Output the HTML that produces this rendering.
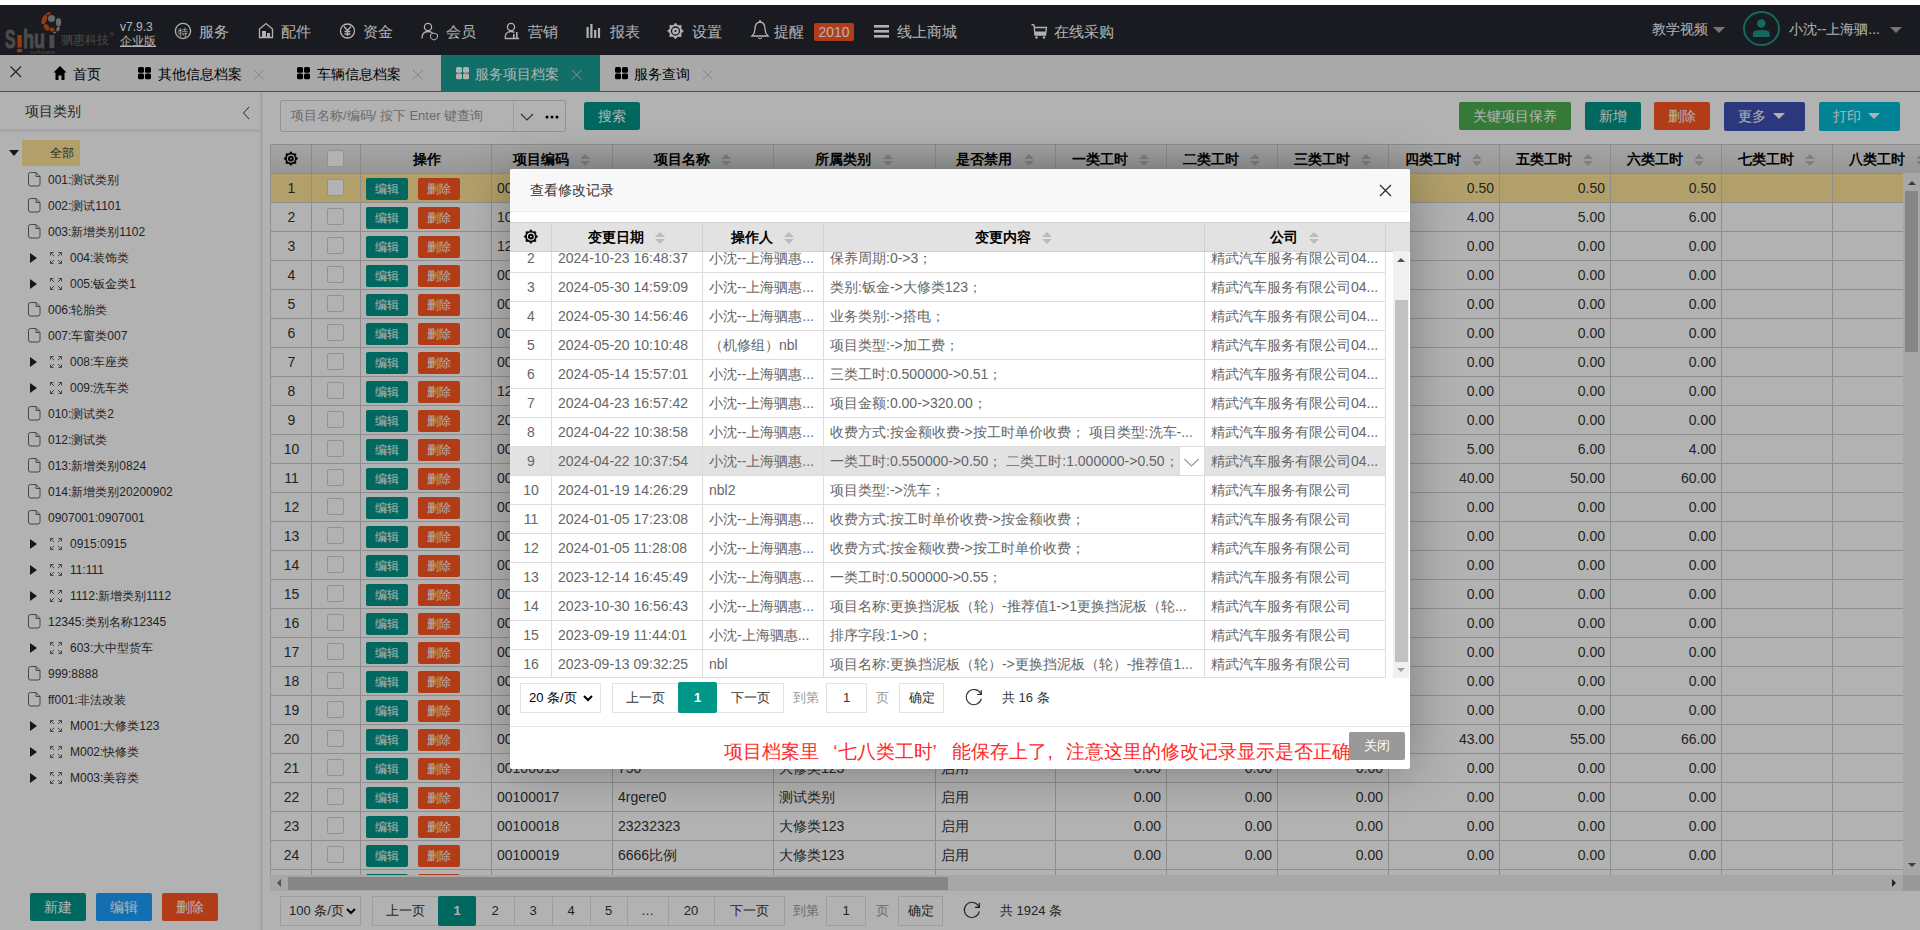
<!DOCTYPE html><html><head><meta charset="utf-8"><style>
*{box-sizing:border-box;margin:0;padding:0}
html,body{width:1920px;height:930px;overflow:hidden;background:#fff;font-family:"Liberation Sans", sans-serif;color:#333}
.a{position:absolute;white-space:nowrap}
svg{position:absolute;overflow:visible}
.nav{position:absolute;top:5px;height:50px;line-height:53px;font-size:15px;color:#fff;white-space:nowrap}
.tab{position:absolute;top:56px;height:36px;line-height:37px;font-size:14px;color:#000;white-space:nowrap}
.tree{position:absolute;font-size:12px;color:#333;white-space:nowrap;height:26px;line-height:26px}
.btn{position:absolute;height:28px;line-height:28px;color:#fff;font-size:14px;text-align:center;border-radius:2px;white-space:nowrap}
.mc{position:absolute;white-space:nowrap;overflow:hidden;font-size:14px;color:#666;height:29px;line-height:29px}
.pg{position:absolute;height:30px;border:1px solid #e2e2e2;background:#fff;font-size:13px;line-height:28px;text-align:center;color:#333}
</style></head><body>
<div class="a" style="left:0;top:5px;width:1920px;height:50px;background:#25282f"></div>
<svg style="left:0;top:0" width="130" height="60">
<text x="5" y="48" font-family="Liberation Sans" font-weight="bold" font-size="25" fill="#6e6e6e" stroke="#6e6e6e" stroke-width="0.9" textLength="10.5" lengthAdjust="spacingAndGlyphs">S</text>
<rect x="17.5" y="35" width="4.2" height="12.5" fill="#d9541b"/><ellipse cx="19.6" cy="50.6" rx="2.8" ry="1.9" fill="#d9541b"/>
<text x="23" y="48" font-family="Liberation Sans" font-weight="bold" font-size="25" fill="#6e6e6e" stroke="#6e6e6e" stroke-width="0.9" textLength="22" lengthAdjust="spacingAndGlyphs">hu</text>
<rect x="49.5" y="35" width="4.8" height="13" fill="#6e6e6e"/>
<text x="30" y="53.5" font-family="Liberation Sans" font-size="6" fill="#6a6a6a" textLength="25" lengthAdjust="spacingAndGlyphs">software</text>
<ellipse cx="44.3" cy="19.5" rx="2.4" ry="5" fill="#d9541b" transform="rotate(20 44.3 19.5)"/>
<ellipse cx="48.5" cy="13.6" rx="2.6" ry="1.2" fill="#d9541b" transform="rotate(-20 48.5 13.6)"/>
<ellipse cx="46.5" cy="27.3" rx="2.4" ry="3.4" fill="#d9541b" transform="rotate(-30 46.5 27.3)"/>
<ellipse cx="52" cy="29.5" rx="2.6" ry="2" fill="#d9541b"/>
<circle cx="51.5" cy="18.4" r="3.5" fill="#999"/>
<ellipse cx="58.5" cy="22.2" rx="2.6" ry="4.3" fill="#999"/>
<ellipse cx="58" cy="29" rx="1.6" ry="2.6" fill="#999" transform="rotate(25 58 29)"/>
<ellipse cx="54.5" cy="32.5" rx="1.6" ry="0.9" fill="#999"/>
<circle cx="112" cy="34" r="1.5" fill="none" stroke="#777" stroke-width="0.6"/>
</svg>
<div class="a" style="left:61px;top:33px;font-size:12px;line-height:14px;color:#6a6a6a">驷惠科技</div>
<div class="a" style="left:120px;top:20px;font-size:12px;color:#fff;line-height:14px">v7.9.3</div>
<div class="a" style="left:120px;top:33px;font-size:12px;color:#fff;line-height:16px;text-decoration:underline">企业版</div>
<div class="nav" style="left:199px">服务</div>
<div class="nav" style="left:281px">配件</div>
<div class="nav" style="left:363px">资金</div>
<div class="nav" style="left:446px">会员</div>
<div class="nav" style="left:528px">营销</div>
<div class="nav" style="left:610px">报表</div>
<div class="nav" style="left:692px">设置</div>
<div class="nav" style="left:774px">提醒</div>
<div class="nav" style="left:897px">线上商城</div>
<div class="nav" style="left:1054px">在线采购</div>
<svg style="left:0;top:0" width="1200" height="60" fill="none" stroke="#fff" stroke-width="1.3">
<circle cx="183" cy="31" r="7.6"/><text x="177.5" y="35.5" font-size="10" fill="#fff" stroke="none" font-family="Liberation Sans">特</text>
<path d="M259.5 37.5 V29 L266 23.5 L272.5 29 V37.5 Z"/><rect x="262" y="31" width="4" height="6" fill="#fff" stroke="none"/><rect x="267" y="33" width="3" height="4" fill="#fff" stroke="none"/>
<circle cx="347.5" cy="31" r="7"/><path d="M344 26.5 L347.5 30.5 L351 26.5 M347.5 30.5 V36 M344.5 31.5 H350.5 M344.5 34 H350.5"/>
<circle cx="428" cy="27" r="3.6"/><path d="M422 38.5 Q422 31.5 428 31.5 Q431 31.5 432.5 33"/><path d="M434 33 L437.5 34.5 V37 Q437.5 39 434 40 Q430.5 39 430.5 37 V34.5 Z" stroke-width="1"/>
<circle cx="511" cy="27" r="3.6"/><path d="M505 38.5 Q505 31.5 511 31.5 Q513 31.5 514.5 32.5 M505 38.5 H519"/><rect x="513" y="34" width="1.6" height="4" fill="#fff" stroke="none"/><rect x="516" y="32" width="1.6" height="6" fill="#fff" stroke="none"/>
</svg>
<svg style="left:0;top:0" width="1200" height="60">
<rect x="586.5" y="27" width="2.2" height="11" fill="#fff"/><rect x="590.3" y="24" width="2.2" height="14" fill="#fff"/><rect x="594.1" y="30" width="2.2" height="8" fill="#fff"/><rect x="597.9" y="28" width="2.2" height="10" fill="#fff"/>
<path d="M885 24.5 h0" />
<rect x="874" y="25" width="15" height="2.6" fill="#fff"/><rect x="874" y="30" width="15" height="2.6" fill="#fff"/><rect x="874" y="35" width="15" height="2.6" fill="#fff"/>
<path d="M1031.5 24.5 L1034 25 L1035 35 H1045.5 L1046.5 27.5 H1034.5" fill="none" stroke="#fff" stroke-width="1.3"/><rect x="1035" y="31.5" width="11" height="3.5" fill="#fff"/><circle cx="1036.5" cy="37.5" r="1.2" fill="#fff"/><circle cx="1044" cy="37.5" r="1.2" fill="#fff"/>
<path d="M752 36 Q755 33 755 29 Q755 22.5 760 22 Q765 22.5 765 29 Q765 33 768 36 Z" fill="none" stroke="#fff" stroke-width="1.3"/><path d="M758 37.5 Q760 40 762 37.5" fill="none" stroke="#fff" stroke-width="1.2"/><circle cx="760" cy="21" r="1" fill="#fff"/>
</svg>
<svg style="left:0;top:0" width="1920" height="930"><polygon points="675.50,23.00 677.77,25.53 681.16,25.34 680.97,28.73 683.50,31.00 680.97,33.27 681.16,36.66 677.77,36.47 675.50,39.00 673.23,36.47 669.84,36.66 670.03,33.27 667.50,31.00 670.03,28.73 669.84,25.34 673.23,25.53" fill="#fff" stroke="#fff" stroke-width="0.6" stroke-linejoin="round"/><circle cx="675.5" cy="31" r="4.00" fill="none" stroke="#25282f" stroke-width="1.28"/><circle cx="675.5" cy="31" r="1.04" fill="#25282f"/></svg>
<div class="a" style="left:814px;top:23px;width:40px;height:18px;background:#ff5722;color:#fff;font-size:14px;line-height:18px;text-align:center;border-radius:2px">2010</div>
<div class="a" style="left:1652px;top:5px;height:50px;line-height:49px;font-size:14px;color:#fff">教学视频</div>
<div class="a" style="left:1713px;top:27px;width:0;height:0;border-left:6.0px solid transparent;border-right:6.0px solid transparent;border-top:6px solid #aaa"></div>
<div class="a" style="left:1743px;top:11px;width:37px;height:35px;border:2px solid #1e9688;border-radius:50%"></div>
<svg style="left:0;top:0" width="1920" height="60"><circle cx="1761.3" cy="23.5" r="4.3" fill="#1e9688"/><path d="M1753 37 V33 Q1753 30 1761.3 30 Q1769.7 30 1769.7 33 V37 Z" fill="#1e9688"/></svg>
<div class="a" style="left:1789px;top:5px;height:50px;line-height:49px;font-size:14px;color:#fff">小沈--上海驷...</div>
<div class="a" style="left:1890px;top:27px;width:0;height:0;border-left:6.0px solid transparent;border-right:6.0px solid transparent;border-top:6px solid #aaa"></div>
<div class="a" style="left:0;top:55px;width:1920px;height:36px;background:#f3f3f3"></div>
<div class="a" style="left:0;top:91px;width:1920px;height:1px;background:#1aa094"></div>
<div class="a" style="left:441px;top:55px;width:159px;height:37px;background:#1aa094"></div>
<svg style="left:0;top:0" width="1920" height="100"><path d="M10.5 66.5 L21.0 77.0 M21.0 66.5 L10.5 77.0" stroke="#333" stroke-width="1.2" fill="none"/></svg>
<svg style="left:0;top:0" width="1920" height="100"><path d="M53.5 72.5 L60 66 L66.5 72.5 Z M55.5 71.5 H64.5 V80 H61.5 V75.5 H58.5 V80 H55.5 Z" fill="#000"/></svg>
<div class="tab" style="left:73px">首页</div>
<svg style="left:0;top:0" width="1920" height="100"><rect x="138" y="67" width="6" height="5.8" rx="1.5" fill="#000"/><rect x="138" y="73.5" width="6" height="5.8" rx="1.5" fill="#000"/><rect x="145" y="67" width="6" height="5.8" rx="1.5" fill="#000"/><rect x="145" y="73.5" width="6" height="5.8" rx="1.5" fill="#000"/></svg>
<div class="tab" style="left:158px;color:#000">其他信息档案</div>
<svg style="left:0;top:0" width="1920" height="100"><path d="M254 70 L263.5 79.5 M263.5 70 L254 79.5" stroke="#bbb" stroke-width="1.0" fill="none"/></svg>
<svg style="left:0;top:0" width="1920" height="100"><rect x="297" y="67" width="6" height="5.8" rx="1.5" fill="#000"/><rect x="297" y="73.5" width="6" height="5.8" rx="1.5" fill="#000"/><rect x="304" y="67" width="6" height="5.8" rx="1.5" fill="#000"/><rect x="304" y="73.5" width="6" height="5.8" rx="1.5" fill="#000"/></svg>
<div class="tab" style="left:317px;color:#000">车辆信息档案</div>
<svg style="left:0;top:0" width="1920" height="100"><path d="M413 70 L422.5 79.5 M422.5 70 L413 79.5" stroke="#bbb" stroke-width="1.0" fill="none"/></svg>
<svg style="left:0;top:0" width="1920" height="100"><rect x="456" y="67" width="6" height="5.8" rx="1.5" fill="#fff"/><rect x="456" y="73.5" width="6" height="5.8" rx="1.5" fill="#fff"/><rect x="463" y="67" width="6" height="5.8" rx="1.5" fill="#fff"/><rect x="463" y="73.5" width="6" height="5.8" rx="1.5" fill="#fff"/></svg>
<div class="tab" style="left:475px;color:#fff">服务项目档案</div>
<svg style="left:0;top:0" width="1920" height="100"><path d="M572 70 L581.5 79.5 M581.5 70 L572 79.5" stroke="#d0d0d0" stroke-width="1.0" fill="none"/></svg>
<svg style="left:0;top:0" width="1920" height="100"><rect x="615" y="67" width="6" height="5.8" rx="1.5" fill="#000"/><rect x="615" y="73.5" width="6" height="5.8" rx="1.5" fill="#000"/><rect x="622" y="67" width="6" height="5.8" rx="1.5" fill="#000"/><rect x="622" y="73.5" width="6" height="5.8" rx="1.5" fill="#000"/></svg>
<div class="tab" style="left:634px;color:#000">服务查询</div>
<svg style="left:0;top:0" width="1920" height="100"><path d="M703 70 L712.5 79.5 M712.5 70 L703 79.5" stroke="#bbb" stroke-width="1.0" fill="none"/></svg>
<div class="a" style="left:0;top:92px;width:260px;height:838px;background:#fff"></div>
<div class="a" style="left:0;top:129px;width:260px;height:3px;background:#ececec"></div>
<div class="a" style="left:25px;top:92px;height:37px;line-height:38px;font-size:14px;color:#333">项目类别</div>
<svg style="left:0;top:0" width="300" height="200"><path d="M249 107 L243.5 113 L249 119" stroke="#333" stroke-width="1" fill="none"/></svg>
<div class="a" style="left:260px;top:92px;width:3px;height:838px;background:#eee"></div>
<div class="a" style="left:22px;top:140px;width:58px;height:26px;background:#ffe699"></div>
<div class="a" style="left:9px;top:150px;width:0;height:0;border-left:5.0px solid transparent;border-right:5.0px solid transparent;border-top:6px solid #222"></div>
<div class="tree" style="left:50px;top:140px">全部</div>
<div class="tree" style="left:48px;top:167px">001:测试类别</div>
<div class="tree" style="left:48px;top:193px">002:测试1101</div>
<div class="tree" style="left:48px;top:219px">003:新增类别1102</div>
<div class="tree" style="left:70px;top:245px">004:装饰类</div>
<div class="a" style="left:30px;top:252.5px;width:0;height:0;border-top:5.5px solid transparent;border-bottom:5.5px solid transparent;border-left:7.5px solid #222"></div>
<div class="tree" style="left:70px;top:271px">005:钣金类1</div>
<div class="a" style="left:30px;top:278.5px;width:0;height:0;border-top:5.5px solid transparent;border-bottom:5.5px solid transparent;border-left:7.5px solid #222"></div>
<div class="tree" style="left:48px;top:297px">006:轮胎类</div>
<div class="tree" style="left:48px;top:323px">007:车窗类007</div>
<div class="tree" style="left:70px;top:349px">008:车座类</div>
<div class="a" style="left:30px;top:356.5px;width:0;height:0;border-top:5.5px solid transparent;border-bottom:5.5px solid transparent;border-left:7.5px solid #222"></div>
<div class="tree" style="left:70px;top:375px">009:洗车类</div>
<div class="a" style="left:30px;top:382.5px;width:0;height:0;border-top:5.5px solid transparent;border-bottom:5.5px solid transparent;border-left:7.5px solid #222"></div>
<div class="tree" style="left:48px;top:401px">010:测试类2</div>
<div class="tree" style="left:48px;top:427px">012:测试类</div>
<div class="tree" style="left:48px;top:453px">013:新增类别0824</div>
<div class="tree" style="left:48px;top:479px">014:新增类别20200902</div>
<div class="tree" style="left:48px;top:505px">0907001:0907001</div>
<div class="tree" style="left:70px;top:531px">0915:0915</div>
<div class="a" style="left:30px;top:538.5px;width:0;height:0;border-top:5.5px solid transparent;border-bottom:5.5px solid transparent;border-left:7.5px solid #222"></div>
<div class="tree" style="left:70px;top:557px">11:111</div>
<div class="a" style="left:30px;top:564.5px;width:0;height:0;border-top:5.5px solid transparent;border-bottom:5.5px solid transparent;border-left:7.5px solid #222"></div>
<div class="tree" style="left:70px;top:583px">1112:新增类别1112</div>
<div class="a" style="left:30px;top:590.5px;width:0;height:0;border-top:5.5px solid transparent;border-bottom:5.5px solid transparent;border-left:7.5px solid #222"></div>
<div class="tree" style="left:48px;top:609px">12345:类别名称12345</div>
<div class="tree" style="left:70px;top:635px">603:大中型货车</div>
<div class="a" style="left:30px;top:642.5px;width:0;height:0;border-top:5.5px solid transparent;border-bottom:5.5px solid transparent;border-left:7.5px solid #222"></div>
<div class="tree" style="left:48px;top:661px">999:8888</div>
<div class="tree" style="left:48px;top:687px">ff001:非法改装</div>
<div class="tree" style="left:70px;top:713px">M001:大修类123</div>
<div class="a" style="left:30px;top:720.5px;width:0;height:0;border-top:5.5px solid transparent;border-bottom:5.5px solid transparent;border-left:7.5px solid #222"></div>
<div class="tree" style="left:70px;top:739px">M002:快修类</div>
<div class="a" style="left:30px;top:746.5px;width:0;height:0;border-top:5.5px solid transparent;border-bottom:5.5px solid transparent;border-left:7.5px solid #222"></div>
<div class="tree" style="left:70px;top:765px">M003:美容类</div>
<div class="a" style="left:30px;top:772.5px;width:0;height:0;border-top:5.5px solid transparent;border-bottom:5.5px solid transparent;border-left:7.5px solid #222"></div>
<svg style="left:0;top:0" width="300" height="930"><path d="M28.5 174.5 Q28.5 172.5 30.5 172.5 H36 L40 176.5 V184 Q40 186 38 186 H30.5 Q28.5 186 28.5 184 Z M36 172.5 V176.5 H40" stroke="#666" stroke-width="1" fill="none"/><path d="M28.5 200.5 Q28.5 198.5 30.5 198.5 H36 L40 202.5 V210 Q40 212 38 212 H30.5 Q28.5 212 28.5 210 Z M36 198.5 V202.5 H40" stroke="#666" stroke-width="1" fill="none"/><path d="M28.5 226.5 Q28.5 224.5 30.5 224.5 H36 L40 228.5 V236 Q40 238 38 238 H30.5 Q28.5 238 28.5 236 Z M36 224.5 V228.5 H40" stroke="#666" stroke-width="1" fill="none"/><path d="M50.5 252.5 L54 256 M50.5 252.5 H53.5 M50.5 252.5 V255.5 M61.5 252.5 L58 256 M61.5 252.5 H58.5 M61.5 252.5 V255.5 M50.5 263.5 L54 260 M50.5 263.5 H53.5 M50.5 263.5 V260.5 M61.5 263.5 L58 260 M61.5 263.5 H58.5 M61.5 263.5 V260.5" stroke="#666" stroke-width="1" fill="none"/><path d="M50.5 278.5 L54 282 M50.5 278.5 H53.5 M50.5 278.5 V281.5 M61.5 278.5 L58 282 M61.5 278.5 H58.5 M61.5 278.5 V281.5 M50.5 289.5 L54 286 M50.5 289.5 H53.5 M50.5 289.5 V286.5 M61.5 289.5 L58 286 M61.5 289.5 H58.5 M61.5 289.5 V286.5" stroke="#666" stroke-width="1" fill="none"/><path d="M28.5 304.5 Q28.5 302.5 30.5 302.5 H36 L40 306.5 V314 Q40 316 38 316 H30.5 Q28.5 316 28.5 314 Z M36 302.5 V306.5 H40" stroke="#666" stroke-width="1" fill="none"/><path d="M28.5 330.5 Q28.5 328.5 30.5 328.5 H36 L40 332.5 V340 Q40 342 38 342 H30.5 Q28.5 342 28.5 340 Z M36 328.5 V332.5 H40" stroke="#666" stroke-width="1" fill="none"/><path d="M50.5 356.5 L54 360 M50.5 356.5 H53.5 M50.5 356.5 V359.5 M61.5 356.5 L58 360 M61.5 356.5 H58.5 M61.5 356.5 V359.5 M50.5 367.5 L54 364 M50.5 367.5 H53.5 M50.5 367.5 V364.5 M61.5 367.5 L58 364 M61.5 367.5 H58.5 M61.5 367.5 V364.5" stroke="#666" stroke-width="1" fill="none"/><path d="M50.5 382.5 L54 386 M50.5 382.5 H53.5 M50.5 382.5 V385.5 M61.5 382.5 L58 386 M61.5 382.5 H58.5 M61.5 382.5 V385.5 M50.5 393.5 L54 390 M50.5 393.5 H53.5 M50.5 393.5 V390.5 M61.5 393.5 L58 390 M61.5 393.5 H58.5 M61.5 393.5 V390.5" stroke="#666" stroke-width="1" fill="none"/><path d="M28.5 408.5 Q28.5 406.5 30.5 406.5 H36 L40 410.5 V418 Q40 420 38 420 H30.5 Q28.5 420 28.5 418 Z M36 406.5 V410.5 H40" stroke="#666" stroke-width="1" fill="none"/><path d="M28.5 434.5 Q28.5 432.5 30.5 432.5 H36 L40 436.5 V444 Q40 446 38 446 H30.5 Q28.5 446 28.5 444 Z M36 432.5 V436.5 H40" stroke="#666" stroke-width="1" fill="none"/><path d="M28.5 460.5 Q28.5 458.5 30.5 458.5 H36 L40 462.5 V470 Q40 472 38 472 H30.5 Q28.5 472 28.5 470 Z M36 458.5 V462.5 H40" stroke="#666" stroke-width="1" fill="none"/><path d="M28.5 486.5 Q28.5 484.5 30.5 484.5 H36 L40 488.5 V496 Q40 498 38 498 H30.5 Q28.5 498 28.5 496 Z M36 484.5 V488.5 H40" stroke="#666" stroke-width="1" fill="none"/><path d="M28.5 512.5 Q28.5 510.5 30.5 510.5 H36 L40 514.5 V522 Q40 524 38 524 H30.5 Q28.5 524 28.5 522 Z M36 510.5 V514.5 H40" stroke="#666" stroke-width="1" fill="none"/><path d="M50.5 538.5 L54 542 M50.5 538.5 H53.5 M50.5 538.5 V541.5 M61.5 538.5 L58 542 M61.5 538.5 H58.5 M61.5 538.5 V541.5 M50.5 549.5 L54 546 M50.5 549.5 H53.5 M50.5 549.5 V546.5 M61.5 549.5 L58 546 M61.5 549.5 H58.5 M61.5 549.5 V546.5" stroke="#666" stroke-width="1" fill="none"/><path d="M50.5 564.5 L54 568 M50.5 564.5 H53.5 M50.5 564.5 V567.5 M61.5 564.5 L58 568 M61.5 564.5 H58.5 M61.5 564.5 V567.5 M50.5 575.5 L54 572 M50.5 575.5 H53.5 M50.5 575.5 V572.5 M61.5 575.5 L58 572 M61.5 575.5 H58.5 M61.5 575.5 V572.5" stroke="#666" stroke-width="1" fill="none"/><path d="M50.5 590.5 L54 594 M50.5 590.5 H53.5 M50.5 590.5 V593.5 M61.5 590.5 L58 594 M61.5 590.5 H58.5 M61.5 590.5 V593.5 M50.5 601.5 L54 598 M50.5 601.5 H53.5 M50.5 601.5 V598.5 M61.5 601.5 L58 598 M61.5 601.5 H58.5 M61.5 601.5 V598.5" stroke="#666" stroke-width="1" fill="none"/><path d="M28.5 616.5 Q28.5 614.5 30.5 614.5 H36 L40 618.5 V626 Q40 628 38 628 H30.5 Q28.5 628 28.5 626 Z M36 614.5 V618.5 H40" stroke="#666" stroke-width="1" fill="none"/><path d="M50.5 642.5 L54 646 M50.5 642.5 H53.5 M50.5 642.5 V645.5 M61.5 642.5 L58 646 M61.5 642.5 H58.5 M61.5 642.5 V645.5 M50.5 653.5 L54 650 M50.5 653.5 H53.5 M50.5 653.5 V650.5 M61.5 653.5 L58 650 M61.5 653.5 H58.5 M61.5 653.5 V650.5" stroke="#666" stroke-width="1" fill="none"/><path d="M28.5 668.5 Q28.5 666.5 30.5 666.5 H36 L40 670.5 V678 Q40 680 38 680 H30.5 Q28.5 680 28.5 678 Z M36 666.5 V670.5 H40" stroke="#666" stroke-width="1" fill="none"/><path d="M28.5 694.5 Q28.5 692.5 30.5 692.5 H36 L40 696.5 V704 Q40 706 38 706 H30.5 Q28.5 706 28.5 704 Z M36 692.5 V696.5 H40" stroke="#666" stroke-width="1" fill="none"/><path d="M50.5 720.5 L54 724 M50.5 720.5 H53.5 M50.5 720.5 V723.5 M61.5 720.5 L58 724 M61.5 720.5 H58.5 M61.5 720.5 V723.5 M50.5 731.5 L54 728 M50.5 731.5 H53.5 M50.5 731.5 V728.5 M61.5 731.5 L58 728 M61.5 731.5 H58.5 M61.5 731.5 V728.5" stroke="#666" stroke-width="1" fill="none"/><path d="M50.5 746.5 L54 750 M50.5 746.5 H53.5 M50.5 746.5 V749.5 M61.5 746.5 L58 750 M61.5 746.5 H58.5 M61.5 746.5 V749.5 M50.5 757.5 L54 754 M50.5 757.5 H53.5 M50.5 757.5 V754.5 M61.5 757.5 L58 754 M61.5 757.5 H58.5 M61.5 757.5 V754.5" stroke="#666" stroke-width="1" fill="none"/><path d="M50.5 772.5 L54 776 M50.5 772.5 H53.5 M50.5 772.5 V775.5 M61.5 772.5 L58 776 M61.5 772.5 H58.5 M61.5 772.5 V775.5 M50.5 783.5 L54 780 M50.5 783.5 H53.5 M50.5 783.5 V780.5 M61.5 783.5 L58 780 M61.5 783.5 H58.5 M61.5 783.5 V780.5" stroke="#666" stroke-width="1" fill="none"/></svg>
<div class="btn" style="left:30px;top:893px;width:56px;background:#009688">新建</div>
<div class="btn" style="left:96px;top:893px;width:56px;background:#1e9fff">编辑</div>
<div class="btn" style="left:162px;top:893px;width:56px;background:#ff5722">删除</div>
<div class="a" style="left:263px;top:92px;width:1657px;height:838px;background:#fff"></div>
<div class="a" style="left:280px;top:100px;width:286px;height:32px;background:#fff;border:1px solid #d2d2d2;border-radius:2px"></div>
<div class="a" style="left:513px;top:101px;width:1px;height:30px;background:#e2e2e2"></div>
<div class="a" style="left:291px;top:100px;height:32px;font-size:13px;line-height:32px;color:#999">项目名称/编码/ 按下 Enter 键查询</div>
<svg style="left:0;top:0" width="700" height="200"><path d="M521 114 L527 120 L533 114" stroke="#444" stroke-width="1.1" fill="none"/><circle cx="547" cy="117" r="1.5" fill="#000"/><circle cx="552" cy="117" r="1.5" fill="#000"/><circle cx="557" cy="117" r="1.5" fill="#000"/></svg>
<div class="btn" style="left:584px;top:102px;width:56px;background:#009688">搜索</div>
<div class="btn" style="left:1459px;top:102px;width:112px;background:#4caf50">关键项目保养</div>
<div class="btn" style="left:1585px;top:102px;width:56px;background:#009688">新增</div>
<div class="btn" style="left:1654px;top:102px;width:56px;background:#ff5722">删除</div>
<div class="btn" style="left:1724px;top:102px;width:81px;height:29px;background:#3f51b5;text-align:left;padding-left:14px">更多</div>
<div class="a" style="left:1773px;top:113px;width:0;height:0;border-left:6.0px solid transparent;border-right:6.0px solid transparent;border-top:6px solid #fff"></div>
<div class="btn" style="left:1819px;top:102px;width:81px;height:29px;background:#00bcd4;text-align:left;padding-left:14px">打印</div>
<div class="a" style="left:1868px;top:113px;width:0;height:0;border-left:6.0px solid transparent;border-right:6.0px solid transparent;border-top:6px solid #fff"></div>
<div class="a" style="left:270px;top:144px;width:1650px;height:731px;overflow:hidden;background:#fff;border-left:1px solid #ccc"><div class="a" style="left:0;top:0;width:1700px;height:30px;background:linear-gradient(#ececec,#d8d8d8);border-top:1px solid #c8c8c8;border-bottom:1px solid #c8c8c8"></div><div class="a" style="left:40px;top:0;width:1px;height:30px;background:#c8c8c8"></div><div class="a" style="left:89px;top:0;width:1px;height:30px;background:#c8c8c8"></div><div class="a" style="left:220px;top:0;width:1px;height:30px;background:#c8c8c8"></div><div class="a" style="left:90px;top:1px;width:131px;height:29px;font-size:14px;font-weight:bold;text-align:center;line-height:29px;color:#000">操作</div><div class="a" style="left:341px;top:0;width:1px;height:30px;background:#c8c8c8"></div><div class="a" style="left:241.8px;top:1px;height:29px;font-size:14px;font-weight:bold;line-height:29px;color:#000">项目编码</div><div class="a" style="left:309.25px;top:9.5px;width:0;height:0;border-left:5.0px solid transparent;border-right:5.0px solid transparent;border-bottom:5px solid #b8b8b8"></div><div class="a" style="left:309.25px;top:16.5px;width:0;height:0;border-left:5.0px solid transparent;border-right:5.0px solid transparent;border-top:5px solid #b8b8b8"></div><div class="a" style="left:502px;top:0;width:1px;height:30px;background:#c8c8c8"></div><div class="a" style="left:382.8px;top:1px;height:29px;font-size:14px;font-weight:bold;line-height:29px;color:#000">项目名称</div><div class="a" style="left:450.25px;top:9.5px;width:0;height:0;border-left:5.0px solid transparent;border-right:5.0px solid transparent;border-bottom:5px solid #b8b8b8"></div><div class="a" style="left:450.25px;top:16.5px;width:0;height:0;border-left:5.0px solid transparent;border-right:5.0px solid transparent;border-top:5px solid #b8b8b8"></div><div class="a" style="left:664px;top:0;width:1px;height:30px;background:#c8c8c8"></div><div class="a" style="left:544.2px;top:1px;height:29px;font-size:14px;font-weight:bold;line-height:29px;color:#000">所属类别</div><div class="a" style="left:611.75px;top:9.5px;width:0;height:0;border-left:5.0px solid transparent;border-right:5.0px solid transparent;border-bottom:5px solid #b8b8b8"></div><div class="a" style="left:611.75px;top:16.5px;width:0;height:0;border-left:5.0px solid transparent;border-right:5.0px solid transparent;border-top:5px solid #b8b8b8"></div><div class="a" style="left:784px;top:0;width:1px;height:30px;background:#c8c8c8"></div><div class="a" style="left:685.2px;top:1px;height:29px;font-size:14px;font-weight:bold;line-height:29px;color:#000">是否禁用</div><div class="a" style="left:752.75px;top:9.5px;width:0;height:0;border-left:5.0px solid transparent;border-right:5.0px solid transparent;border-bottom:5px solid #b8b8b8"></div><div class="a" style="left:752.75px;top:16.5px;width:0;height:0;border-left:5.0px solid transparent;border-right:5.0px solid transparent;border-top:5px solid #b8b8b8"></div><div class="a" style="left:895px;top:0;width:1px;height:30px;background:#c8c8c8"></div><div class="a" style="left:800.8px;top:1px;height:29px;font-size:14px;font-weight:bold;line-height:29px;color:#000">一类工时</div><div class="a" style="left:868.25px;top:9.5px;width:0;height:0;border-left:5.0px solid transparent;border-right:5.0px solid transparent;border-bottom:5px solid #b8b8b8"></div><div class="a" style="left:868.25px;top:16.5px;width:0;height:0;border-left:5.0px solid transparent;border-right:5.0px solid transparent;border-top:5px solid #b8b8b8"></div><div class="a" style="left:1006px;top:0;width:1px;height:30px;background:#c8c8c8"></div><div class="a" style="left:911.8px;top:1px;height:29px;font-size:14px;font-weight:bold;line-height:29px;color:#000">二类工时</div><div class="a" style="left:979.25px;top:9.5px;width:0;height:0;border-left:5.0px solid transparent;border-right:5.0px solid transparent;border-bottom:5px solid #b8b8b8"></div><div class="a" style="left:979.25px;top:16.5px;width:0;height:0;border-left:5.0px solid transparent;border-right:5.0px solid transparent;border-top:5px solid #b8b8b8"></div><div class="a" style="left:1117px;top:0;width:1px;height:30px;background:#c8c8c8"></div><div class="a" style="left:1022.8px;top:1px;height:29px;font-size:14px;font-weight:bold;line-height:29px;color:#000">三类工时</div><div class="a" style="left:1090.25px;top:9.5px;width:0;height:0;border-left:5.0px solid transparent;border-right:5.0px solid transparent;border-bottom:5px solid #b8b8b8"></div><div class="a" style="left:1090.25px;top:16.5px;width:0;height:0;border-left:5.0px solid transparent;border-right:5.0px solid transparent;border-top:5px solid #b8b8b8"></div><div class="a" style="left:1228px;top:0;width:1px;height:30px;background:#c8c8c8"></div><div class="a" style="left:1133.8px;top:1px;height:29px;font-size:14px;font-weight:bold;line-height:29px;color:#000">四类工时</div><div class="a" style="left:1201.25px;top:9.5px;width:0;height:0;border-left:5.0px solid transparent;border-right:5.0px solid transparent;border-bottom:5px solid #b8b8b8"></div><div class="a" style="left:1201.25px;top:16.5px;width:0;height:0;border-left:5.0px solid transparent;border-right:5.0px solid transparent;border-top:5px solid #b8b8b8"></div><div class="a" style="left:1339px;top:0;width:1px;height:30px;background:#c8c8c8"></div><div class="a" style="left:1244.8px;top:1px;height:29px;font-size:14px;font-weight:bold;line-height:29px;color:#000">五类工时</div><div class="a" style="left:1312.25px;top:9.5px;width:0;height:0;border-left:5.0px solid transparent;border-right:5.0px solid transparent;border-bottom:5px solid #b8b8b8"></div><div class="a" style="left:1312.25px;top:16.5px;width:0;height:0;border-left:5.0px solid transparent;border-right:5.0px solid transparent;border-top:5px solid #b8b8b8"></div><div class="a" style="left:1450px;top:0;width:1px;height:30px;background:#c8c8c8"></div><div class="a" style="left:1355.8px;top:1px;height:29px;font-size:14px;font-weight:bold;line-height:29px;color:#000">六类工时</div><div class="a" style="left:1423.25px;top:9.5px;width:0;height:0;border-left:5.0px solid transparent;border-right:5.0px solid transparent;border-bottom:5px solid #b8b8b8"></div><div class="a" style="left:1423.25px;top:16.5px;width:0;height:0;border-left:5.0px solid transparent;border-right:5.0px solid transparent;border-top:5px solid #b8b8b8"></div><div class="a" style="left:1561px;top:0;width:1px;height:30px;background:#c8c8c8"></div><div class="a" style="left:1466.8px;top:1px;height:29px;font-size:14px;font-weight:bold;line-height:29px;color:#000">七类工时</div><div class="a" style="left:1534.25px;top:9.5px;width:0;height:0;border-left:5.0px solid transparent;border-right:5.0px solid transparent;border-bottom:5px solid #b8b8b8"></div><div class="a" style="left:1534.25px;top:16.5px;width:0;height:0;border-left:5.0px solid transparent;border-right:5.0px solid transparent;border-top:5px solid #b8b8b8"></div><div class="a" style="left:1672px;top:0;width:1px;height:30px;background:#c8c8c8"></div><div class="a" style="left:1577.8px;top:1px;height:29px;font-size:14px;font-weight:bold;line-height:29px;color:#000">八类工时</div><div class="a" style="left:1645.25px;top:9.5px;width:0;height:0;border-left:5.0px solid transparent;border-right:5.0px solid transparent;border-bottom:5px solid #b8b8b8"></div><div class="a" style="left:1645.25px;top:16.5px;width:0;height:0;border-left:5.0px solid transparent;border-right:5.0px solid transparent;border-top:5px solid #b8b8b8"></div><div class="a" style="left:56px;top:6px;width:17px;height:17px;border:1px solid #d2d2d2;background:#fff;border-radius:2px"></div><div class="a" style="left:0;top:30px;width:1700px;height:29px;background:#ffe699;border-bottom:1px solid #ccc"></div><div class="a" style="left:0;top:30px;width:41px;height:29px;line-height:29px;text-align:center;font-size:14px;color:#333">1</div><div class="a" style="left:56px;top:35px;width:17px;height:17px;border:1px solid #d2d2d2;background:#fff;border-radius:2px"></div><div class="a" style="left:95px;top:34px;width:42px;height:22px;line-height:22px;font-size:12px;color:#fff;text-align:center;background:#009688;border-radius:2px">编辑</div><div class="a" style="left:147px;top:34px;width:42px;height:22px;line-height:22px;font-size:12px;color:#fff;text-align:center;background:#ff5722;border-radius:2px">删除</div><div class="a" style="left:1129px;top:30px;width:94px;height:29px;line-height:29px;text-align:right;font-size:14px;color:#333">0.50</div><div class="a" style="left:1240px;top:30px;width:94px;height:29px;line-height:29px;text-align:right;font-size:14px;color:#333">0.50</div><div class="a" style="left:1351px;top:30px;width:94px;height:29px;line-height:29px;text-align:right;font-size:14px;color:#333">0.50</div><div class="a" style="left:796px;top:30px;width:94px;height:29px;line-height:29px;text-align:right;font-size:14px;color:#333">0.00</div><div class="a" style="left:907px;top:30px;width:94px;height:29px;line-height:29px;text-align:right;font-size:14px;color:#333">0.00</div><div class="a" style="left:1018px;top:30px;width:94px;height:29px;line-height:29px;text-align:right;font-size:14px;color:#333">0.00</div><div class="a" style="left:0;top:59px;width:1700px;height:29px;background:#fff;border-bottom:1px solid #ccc"></div><div class="a" style="left:0;top:59px;width:41px;height:29px;line-height:29px;text-align:center;font-size:14px;color:#333">2</div><div class="a" style="left:56px;top:64px;width:17px;height:17px;border:1px solid #d2d2d2;background:#fff;border-radius:2px"></div><div class="a" style="left:95px;top:63px;width:42px;height:22px;line-height:22px;font-size:12px;color:#fff;text-align:center;background:#009688;border-radius:2px">编辑</div><div class="a" style="left:147px;top:63px;width:42px;height:22px;line-height:22px;font-size:12px;color:#fff;text-align:center;background:#ff5722;border-radius:2px">删除</div><div class="a" style="left:1129px;top:59px;width:94px;height:29px;line-height:29px;text-align:right;font-size:14px;color:#333">4.00</div><div class="a" style="left:1240px;top:59px;width:94px;height:29px;line-height:29px;text-align:right;font-size:14px;color:#333">5.00</div><div class="a" style="left:1351px;top:59px;width:94px;height:29px;line-height:29px;text-align:right;font-size:14px;color:#333">6.00</div><div class="a" style="left:796px;top:59px;width:94px;height:29px;line-height:29px;text-align:right;font-size:14px;color:#333">0.00</div><div class="a" style="left:907px;top:59px;width:94px;height:29px;line-height:29px;text-align:right;font-size:14px;color:#333">0.00</div><div class="a" style="left:1018px;top:59px;width:94px;height:29px;line-height:29px;text-align:right;font-size:14px;color:#333">0.00</div><div class="a" style="left:0;top:88px;width:1700px;height:29px;background:#fff;border-bottom:1px solid #ccc"></div><div class="a" style="left:0;top:88px;width:41px;height:29px;line-height:29px;text-align:center;font-size:14px;color:#333">3</div><div class="a" style="left:56px;top:93px;width:17px;height:17px;border:1px solid #d2d2d2;background:#fff;border-radius:2px"></div><div class="a" style="left:95px;top:92px;width:42px;height:22px;line-height:22px;font-size:12px;color:#fff;text-align:center;background:#009688;border-radius:2px">编辑</div><div class="a" style="left:147px;top:92px;width:42px;height:22px;line-height:22px;font-size:12px;color:#fff;text-align:center;background:#ff5722;border-radius:2px">删除</div><div class="a" style="left:1129px;top:88px;width:94px;height:29px;line-height:29px;text-align:right;font-size:14px;color:#333">0.00</div><div class="a" style="left:1240px;top:88px;width:94px;height:29px;line-height:29px;text-align:right;font-size:14px;color:#333">0.00</div><div class="a" style="left:1351px;top:88px;width:94px;height:29px;line-height:29px;text-align:right;font-size:14px;color:#333">0.00</div><div class="a" style="left:796px;top:88px;width:94px;height:29px;line-height:29px;text-align:right;font-size:14px;color:#333">0.00</div><div class="a" style="left:907px;top:88px;width:94px;height:29px;line-height:29px;text-align:right;font-size:14px;color:#333">0.00</div><div class="a" style="left:1018px;top:88px;width:94px;height:29px;line-height:29px;text-align:right;font-size:14px;color:#333">0.00</div><div class="a" style="left:0;top:117px;width:1700px;height:29px;background:#fff;border-bottom:1px solid #ccc"></div><div class="a" style="left:0;top:117px;width:41px;height:29px;line-height:29px;text-align:center;font-size:14px;color:#333">4</div><div class="a" style="left:56px;top:122px;width:17px;height:17px;border:1px solid #d2d2d2;background:#fff;border-radius:2px"></div><div class="a" style="left:95px;top:121px;width:42px;height:22px;line-height:22px;font-size:12px;color:#fff;text-align:center;background:#009688;border-radius:2px">编辑</div><div class="a" style="left:147px;top:121px;width:42px;height:22px;line-height:22px;font-size:12px;color:#fff;text-align:center;background:#ff5722;border-radius:2px">删除</div><div class="a" style="left:1129px;top:117px;width:94px;height:29px;line-height:29px;text-align:right;font-size:14px;color:#333">0.00</div><div class="a" style="left:1240px;top:117px;width:94px;height:29px;line-height:29px;text-align:right;font-size:14px;color:#333">0.00</div><div class="a" style="left:1351px;top:117px;width:94px;height:29px;line-height:29px;text-align:right;font-size:14px;color:#333">0.00</div><div class="a" style="left:796px;top:117px;width:94px;height:29px;line-height:29px;text-align:right;font-size:14px;color:#333">0.00</div><div class="a" style="left:907px;top:117px;width:94px;height:29px;line-height:29px;text-align:right;font-size:14px;color:#333">0.00</div><div class="a" style="left:1018px;top:117px;width:94px;height:29px;line-height:29px;text-align:right;font-size:14px;color:#333">0.00</div><div class="a" style="left:0;top:146px;width:1700px;height:29px;background:#fff;border-bottom:1px solid #ccc"></div><div class="a" style="left:0;top:146px;width:41px;height:29px;line-height:29px;text-align:center;font-size:14px;color:#333">5</div><div class="a" style="left:56px;top:151px;width:17px;height:17px;border:1px solid #d2d2d2;background:#fff;border-radius:2px"></div><div class="a" style="left:95px;top:150px;width:42px;height:22px;line-height:22px;font-size:12px;color:#fff;text-align:center;background:#009688;border-radius:2px">编辑</div><div class="a" style="left:147px;top:150px;width:42px;height:22px;line-height:22px;font-size:12px;color:#fff;text-align:center;background:#ff5722;border-radius:2px">删除</div><div class="a" style="left:1129px;top:146px;width:94px;height:29px;line-height:29px;text-align:right;font-size:14px;color:#333">0.00</div><div class="a" style="left:1240px;top:146px;width:94px;height:29px;line-height:29px;text-align:right;font-size:14px;color:#333">0.00</div><div class="a" style="left:1351px;top:146px;width:94px;height:29px;line-height:29px;text-align:right;font-size:14px;color:#333">0.00</div><div class="a" style="left:796px;top:146px;width:94px;height:29px;line-height:29px;text-align:right;font-size:14px;color:#333">0.00</div><div class="a" style="left:907px;top:146px;width:94px;height:29px;line-height:29px;text-align:right;font-size:14px;color:#333">0.00</div><div class="a" style="left:1018px;top:146px;width:94px;height:29px;line-height:29px;text-align:right;font-size:14px;color:#333">0.00</div><div class="a" style="left:0;top:175px;width:1700px;height:29px;background:#fff;border-bottom:1px solid #ccc"></div><div class="a" style="left:0;top:175px;width:41px;height:29px;line-height:29px;text-align:center;font-size:14px;color:#333">6</div><div class="a" style="left:56px;top:180px;width:17px;height:17px;border:1px solid #d2d2d2;background:#fff;border-radius:2px"></div><div class="a" style="left:95px;top:179px;width:42px;height:22px;line-height:22px;font-size:12px;color:#fff;text-align:center;background:#009688;border-radius:2px">编辑</div><div class="a" style="left:147px;top:179px;width:42px;height:22px;line-height:22px;font-size:12px;color:#fff;text-align:center;background:#ff5722;border-radius:2px">删除</div><div class="a" style="left:1129px;top:175px;width:94px;height:29px;line-height:29px;text-align:right;font-size:14px;color:#333">0.00</div><div class="a" style="left:1240px;top:175px;width:94px;height:29px;line-height:29px;text-align:right;font-size:14px;color:#333">0.00</div><div class="a" style="left:1351px;top:175px;width:94px;height:29px;line-height:29px;text-align:right;font-size:14px;color:#333">0.00</div><div class="a" style="left:796px;top:175px;width:94px;height:29px;line-height:29px;text-align:right;font-size:14px;color:#333">0.00</div><div class="a" style="left:907px;top:175px;width:94px;height:29px;line-height:29px;text-align:right;font-size:14px;color:#333">0.00</div><div class="a" style="left:1018px;top:175px;width:94px;height:29px;line-height:29px;text-align:right;font-size:14px;color:#333">0.00</div><div class="a" style="left:0;top:204px;width:1700px;height:29px;background:#fff;border-bottom:1px solid #ccc"></div><div class="a" style="left:0;top:204px;width:41px;height:29px;line-height:29px;text-align:center;font-size:14px;color:#333">7</div><div class="a" style="left:56px;top:209px;width:17px;height:17px;border:1px solid #d2d2d2;background:#fff;border-radius:2px"></div><div class="a" style="left:95px;top:208px;width:42px;height:22px;line-height:22px;font-size:12px;color:#fff;text-align:center;background:#009688;border-radius:2px">编辑</div><div class="a" style="left:147px;top:208px;width:42px;height:22px;line-height:22px;font-size:12px;color:#fff;text-align:center;background:#ff5722;border-radius:2px">删除</div><div class="a" style="left:1129px;top:204px;width:94px;height:29px;line-height:29px;text-align:right;font-size:14px;color:#333">0.00</div><div class="a" style="left:1240px;top:204px;width:94px;height:29px;line-height:29px;text-align:right;font-size:14px;color:#333">0.00</div><div class="a" style="left:1351px;top:204px;width:94px;height:29px;line-height:29px;text-align:right;font-size:14px;color:#333">0.00</div><div class="a" style="left:796px;top:204px;width:94px;height:29px;line-height:29px;text-align:right;font-size:14px;color:#333">0.00</div><div class="a" style="left:907px;top:204px;width:94px;height:29px;line-height:29px;text-align:right;font-size:14px;color:#333">0.00</div><div class="a" style="left:1018px;top:204px;width:94px;height:29px;line-height:29px;text-align:right;font-size:14px;color:#333">0.00</div><div class="a" style="left:0;top:233px;width:1700px;height:29px;background:#fff;border-bottom:1px solid #ccc"></div><div class="a" style="left:0;top:233px;width:41px;height:29px;line-height:29px;text-align:center;font-size:14px;color:#333">8</div><div class="a" style="left:56px;top:238px;width:17px;height:17px;border:1px solid #d2d2d2;background:#fff;border-radius:2px"></div><div class="a" style="left:95px;top:237px;width:42px;height:22px;line-height:22px;font-size:12px;color:#fff;text-align:center;background:#009688;border-radius:2px">编辑</div><div class="a" style="left:147px;top:237px;width:42px;height:22px;line-height:22px;font-size:12px;color:#fff;text-align:center;background:#ff5722;border-radius:2px">删除</div><div class="a" style="left:1129px;top:233px;width:94px;height:29px;line-height:29px;text-align:right;font-size:14px;color:#333">0.00</div><div class="a" style="left:1240px;top:233px;width:94px;height:29px;line-height:29px;text-align:right;font-size:14px;color:#333">0.00</div><div class="a" style="left:1351px;top:233px;width:94px;height:29px;line-height:29px;text-align:right;font-size:14px;color:#333">0.00</div><div class="a" style="left:796px;top:233px;width:94px;height:29px;line-height:29px;text-align:right;font-size:14px;color:#333">0.00</div><div class="a" style="left:907px;top:233px;width:94px;height:29px;line-height:29px;text-align:right;font-size:14px;color:#333">0.00</div><div class="a" style="left:1018px;top:233px;width:94px;height:29px;line-height:29px;text-align:right;font-size:14px;color:#333">0.00</div><div class="a" style="left:0;top:262px;width:1700px;height:29px;background:#fff;border-bottom:1px solid #ccc"></div><div class="a" style="left:0;top:262px;width:41px;height:29px;line-height:29px;text-align:center;font-size:14px;color:#333">9</div><div class="a" style="left:56px;top:267px;width:17px;height:17px;border:1px solid #d2d2d2;background:#fff;border-radius:2px"></div><div class="a" style="left:95px;top:266px;width:42px;height:22px;line-height:22px;font-size:12px;color:#fff;text-align:center;background:#009688;border-radius:2px">编辑</div><div class="a" style="left:147px;top:266px;width:42px;height:22px;line-height:22px;font-size:12px;color:#fff;text-align:center;background:#ff5722;border-radius:2px">删除</div><div class="a" style="left:1129px;top:262px;width:94px;height:29px;line-height:29px;text-align:right;font-size:14px;color:#333">0.00</div><div class="a" style="left:1240px;top:262px;width:94px;height:29px;line-height:29px;text-align:right;font-size:14px;color:#333">0.00</div><div class="a" style="left:1351px;top:262px;width:94px;height:29px;line-height:29px;text-align:right;font-size:14px;color:#333">0.00</div><div class="a" style="left:796px;top:262px;width:94px;height:29px;line-height:29px;text-align:right;font-size:14px;color:#333">0.00</div><div class="a" style="left:907px;top:262px;width:94px;height:29px;line-height:29px;text-align:right;font-size:14px;color:#333">0.00</div><div class="a" style="left:1018px;top:262px;width:94px;height:29px;line-height:29px;text-align:right;font-size:14px;color:#333">0.00</div><div class="a" style="left:0;top:291px;width:1700px;height:29px;background:#fff;border-bottom:1px solid #ccc"></div><div class="a" style="left:0;top:291px;width:41px;height:29px;line-height:29px;text-align:center;font-size:14px;color:#333">10</div><div class="a" style="left:56px;top:296px;width:17px;height:17px;border:1px solid #d2d2d2;background:#fff;border-radius:2px"></div><div class="a" style="left:95px;top:295px;width:42px;height:22px;line-height:22px;font-size:12px;color:#fff;text-align:center;background:#009688;border-radius:2px">编辑</div><div class="a" style="left:147px;top:295px;width:42px;height:22px;line-height:22px;font-size:12px;color:#fff;text-align:center;background:#ff5722;border-radius:2px">删除</div><div class="a" style="left:1129px;top:291px;width:94px;height:29px;line-height:29px;text-align:right;font-size:14px;color:#333">5.00</div><div class="a" style="left:1240px;top:291px;width:94px;height:29px;line-height:29px;text-align:right;font-size:14px;color:#333">6.00</div><div class="a" style="left:1351px;top:291px;width:94px;height:29px;line-height:29px;text-align:right;font-size:14px;color:#333">4.00</div><div class="a" style="left:796px;top:291px;width:94px;height:29px;line-height:29px;text-align:right;font-size:14px;color:#333">0.00</div><div class="a" style="left:907px;top:291px;width:94px;height:29px;line-height:29px;text-align:right;font-size:14px;color:#333">0.00</div><div class="a" style="left:1018px;top:291px;width:94px;height:29px;line-height:29px;text-align:right;font-size:14px;color:#333">0.00</div><div class="a" style="left:0;top:320px;width:1700px;height:29px;background:#fff;border-bottom:1px solid #ccc"></div><div class="a" style="left:0;top:320px;width:41px;height:29px;line-height:29px;text-align:center;font-size:14px;color:#333">11</div><div class="a" style="left:56px;top:325px;width:17px;height:17px;border:1px solid #d2d2d2;background:#fff;border-radius:2px"></div><div class="a" style="left:95px;top:324px;width:42px;height:22px;line-height:22px;font-size:12px;color:#fff;text-align:center;background:#009688;border-radius:2px">编辑</div><div class="a" style="left:147px;top:324px;width:42px;height:22px;line-height:22px;font-size:12px;color:#fff;text-align:center;background:#ff5722;border-radius:2px">删除</div><div class="a" style="left:1129px;top:320px;width:94px;height:29px;line-height:29px;text-align:right;font-size:14px;color:#333">40.00</div><div class="a" style="left:1240px;top:320px;width:94px;height:29px;line-height:29px;text-align:right;font-size:14px;color:#333">50.00</div><div class="a" style="left:1351px;top:320px;width:94px;height:29px;line-height:29px;text-align:right;font-size:14px;color:#333">60.00</div><div class="a" style="left:796px;top:320px;width:94px;height:29px;line-height:29px;text-align:right;font-size:14px;color:#333">0.00</div><div class="a" style="left:907px;top:320px;width:94px;height:29px;line-height:29px;text-align:right;font-size:14px;color:#333">0.00</div><div class="a" style="left:1018px;top:320px;width:94px;height:29px;line-height:29px;text-align:right;font-size:14px;color:#333">0.00</div><div class="a" style="left:0;top:349px;width:1700px;height:29px;background:#fff;border-bottom:1px solid #ccc"></div><div class="a" style="left:0;top:349px;width:41px;height:29px;line-height:29px;text-align:center;font-size:14px;color:#333">12</div><div class="a" style="left:56px;top:354px;width:17px;height:17px;border:1px solid #d2d2d2;background:#fff;border-radius:2px"></div><div class="a" style="left:95px;top:353px;width:42px;height:22px;line-height:22px;font-size:12px;color:#fff;text-align:center;background:#009688;border-radius:2px">编辑</div><div class="a" style="left:147px;top:353px;width:42px;height:22px;line-height:22px;font-size:12px;color:#fff;text-align:center;background:#ff5722;border-radius:2px">删除</div><div class="a" style="left:1129px;top:349px;width:94px;height:29px;line-height:29px;text-align:right;font-size:14px;color:#333">0.00</div><div class="a" style="left:1240px;top:349px;width:94px;height:29px;line-height:29px;text-align:right;font-size:14px;color:#333">0.00</div><div class="a" style="left:1351px;top:349px;width:94px;height:29px;line-height:29px;text-align:right;font-size:14px;color:#333">0.00</div><div class="a" style="left:796px;top:349px;width:94px;height:29px;line-height:29px;text-align:right;font-size:14px;color:#333">0.00</div><div class="a" style="left:907px;top:349px;width:94px;height:29px;line-height:29px;text-align:right;font-size:14px;color:#333">0.00</div><div class="a" style="left:1018px;top:349px;width:94px;height:29px;line-height:29px;text-align:right;font-size:14px;color:#333">0.00</div><div class="a" style="left:0;top:378px;width:1700px;height:29px;background:#fff;border-bottom:1px solid #ccc"></div><div class="a" style="left:0;top:378px;width:41px;height:29px;line-height:29px;text-align:center;font-size:14px;color:#333">13</div><div class="a" style="left:56px;top:383px;width:17px;height:17px;border:1px solid #d2d2d2;background:#fff;border-radius:2px"></div><div class="a" style="left:95px;top:382px;width:42px;height:22px;line-height:22px;font-size:12px;color:#fff;text-align:center;background:#009688;border-radius:2px">编辑</div><div class="a" style="left:147px;top:382px;width:42px;height:22px;line-height:22px;font-size:12px;color:#fff;text-align:center;background:#ff5722;border-radius:2px">删除</div><div class="a" style="left:1129px;top:378px;width:94px;height:29px;line-height:29px;text-align:right;font-size:14px;color:#333">0.00</div><div class="a" style="left:1240px;top:378px;width:94px;height:29px;line-height:29px;text-align:right;font-size:14px;color:#333">0.00</div><div class="a" style="left:1351px;top:378px;width:94px;height:29px;line-height:29px;text-align:right;font-size:14px;color:#333">0.00</div><div class="a" style="left:796px;top:378px;width:94px;height:29px;line-height:29px;text-align:right;font-size:14px;color:#333">0.00</div><div class="a" style="left:907px;top:378px;width:94px;height:29px;line-height:29px;text-align:right;font-size:14px;color:#333">0.00</div><div class="a" style="left:1018px;top:378px;width:94px;height:29px;line-height:29px;text-align:right;font-size:14px;color:#333">0.00</div><div class="a" style="left:0;top:407px;width:1700px;height:29px;background:#fff;border-bottom:1px solid #ccc"></div><div class="a" style="left:0;top:407px;width:41px;height:29px;line-height:29px;text-align:center;font-size:14px;color:#333">14</div><div class="a" style="left:56px;top:412px;width:17px;height:17px;border:1px solid #d2d2d2;background:#fff;border-radius:2px"></div><div class="a" style="left:95px;top:411px;width:42px;height:22px;line-height:22px;font-size:12px;color:#fff;text-align:center;background:#009688;border-radius:2px">编辑</div><div class="a" style="left:147px;top:411px;width:42px;height:22px;line-height:22px;font-size:12px;color:#fff;text-align:center;background:#ff5722;border-radius:2px">删除</div><div class="a" style="left:1129px;top:407px;width:94px;height:29px;line-height:29px;text-align:right;font-size:14px;color:#333">0.00</div><div class="a" style="left:1240px;top:407px;width:94px;height:29px;line-height:29px;text-align:right;font-size:14px;color:#333">0.00</div><div class="a" style="left:1351px;top:407px;width:94px;height:29px;line-height:29px;text-align:right;font-size:14px;color:#333">0.00</div><div class="a" style="left:796px;top:407px;width:94px;height:29px;line-height:29px;text-align:right;font-size:14px;color:#333">0.00</div><div class="a" style="left:907px;top:407px;width:94px;height:29px;line-height:29px;text-align:right;font-size:14px;color:#333">0.00</div><div class="a" style="left:1018px;top:407px;width:94px;height:29px;line-height:29px;text-align:right;font-size:14px;color:#333">0.00</div><div class="a" style="left:0;top:436px;width:1700px;height:29px;background:#fff;border-bottom:1px solid #ccc"></div><div class="a" style="left:0;top:436px;width:41px;height:29px;line-height:29px;text-align:center;font-size:14px;color:#333">15</div><div class="a" style="left:56px;top:441px;width:17px;height:17px;border:1px solid #d2d2d2;background:#fff;border-radius:2px"></div><div class="a" style="left:95px;top:440px;width:42px;height:22px;line-height:22px;font-size:12px;color:#fff;text-align:center;background:#009688;border-radius:2px">编辑</div><div class="a" style="left:147px;top:440px;width:42px;height:22px;line-height:22px;font-size:12px;color:#fff;text-align:center;background:#ff5722;border-radius:2px">删除</div><div class="a" style="left:1129px;top:436px;width:94px;height:29px;line-height:29px;text-align:right;font-size:14px;color:#333">0.00</div><div class="a" style="left:1240px;top:436px;width:94px;height:29px;line-height:29px;text-align:right;font-size:14px;color:#333">0.00</div><div class="a" style="left:1351px;top:436px;width:94px;height:29px;line-height:29px;text-align:right;font-size:14px;color:#333">0.00</div><div class="a" style="left:796px;top:436px;width:94px;height:29px;line-height:29px;text-align:right;font-size:14px;color:#333">0.00</div><div class="a" style="left:907px;top:436px;width:94px;height:29px;line-height:29px;text-align:right;font-size:14px;color:#333">0.00</div><div class="a" style="left:1018px;top:436px;width:94px;height:29px;line-height:29px;text-align:right;font-size:14px;color:#333">0.00</div><div class="a" style="left:0;top:465px;width:1700px;height:29px;background:#fff;border-bottom:1px solid #ccc"></div><div class="a" style="left:0;top:465px;width:41px;height:29px;line-height:29px;text-align:center;font-size:14px;color:#333">16</div><div class="a" style="left:56px;top:470px;width:17px;height:17px;border:1px solid #d2d2d2;background:#fff;border-radius:2px"></div><div class="a" style="left:95px;top:469px;width:42px;height:22px;line-height:22px;font-size:12px;color:#fff;text-align:center;background:#009688;border-radius:2px">编辑</div><div class="a" style="left:147px;top:469px;width:42px;height:22px;line-height:22px;font-size:12px;color:#fff;text-align:center;background:#ff5722;border-radius:2px">删除</div><div class="a" style="left:1129px;top:465px;width:94px;height:29px;line-height:29px;text-align:right;font-size:14px;color:#333">0.00</div><div class="a" style="left:1240px;top:465px;width:94px;height:29px;line-height:29px;text-align:right;font-size:14px;color:#333">0.00</div><div class="a" style="left:1351px;top:465px;width:94px;height:29px;line-height:29px;text-align:right;font-size:14px;color:#333">0.00</div><div class="a" style="left:796px;top:465px;width:94px;height:29px;line-height:29px;text-align:right;font-size:14px;color:#333">0.00</div><div class="a" style="left:907px;top:465px;width:94px;height:29px;line-height:29px;text-align:right;font-size:14px;color:#333">0.00</div><div class="a" style="left:1018px;top:465px;width:94px;height:29px;line-height:29px;text-align:right;font-size:14px;color:#333">0.00</div><div class="a" style="left:0;top:494px;width:1700px;height:29px;background:#fff;border-bottom:1px solid #ccc"></div><div class="a" style="left:0;top:494px;width:41px;height:29px;line-height:29px;text-align:center;font-size:14px;color:#333">17</div><div class="a" style="left:56px;top:499px;width:17px;height:17px;border:1px solid #d2d2d2;background:#fff;border-radius:2px"></div><div class="a" style="left:95px;top:498px;width:42px;height:22px;line-height:22px;font-size:12px;color:#fff;text-align:center;background:#009688;border-radius:2px">编辑</div><div class="a" style="left:147px;top:498px;width:42px;height:22px;line-height:22px;font-size:12px;color:#fff;text-align:center;background:#ff5722;border-radius:2px">删除</div><div class="a" style="left:1129px;top:494px;width:94px;height:29px;line-height:29px;text-align:right;font-size:14px;color:#333">0.00</div><div class="a" style="left:1240px;top:494px;width:94px;height:29px;line-height:29px;text-align:right;font-size:14px;color:#333">0.00</div><div class="a" style="left:1351px;top:494px;width:94px;height:29px;line-height:29px;text-align:right;font-size:14px;color:#333">0.00</div><div class="a" style="left:796px;top:494px;width:94px;height:29px;line-height:29px;text-align:right;font-size:14px;color:#333">0.00</div><div class="a" style="left:907px;top:494px;width:94px;height:29px;line-height:29px;text-align:right;font-size:14px;color:#333">0.00</div><div class="a" style="left:1018px;top:494px;width:94px;height:29px;line-height:29px;text-align:right;font-size:14px;color:#333">0.00</div><div class="a" style="left:0;top:523px;width:1700px;height:29px;background:#fff;border-bottom:1px solid #ccc"></div><div class="a" style="left:0;top:523px;width:41px;height:29px;line-height:29px;text-align:center;font-size:14px;color:#333">18</div><div class="a" style="left:56px;top:528px;width:17px;height:17px;border:1px solid #d2d2d2;background:#fff;border-radius:2px"></div><div class="a" style="left:95px;top:527px;width:42px;height:22px;line-height:22px;font-size:12px;color:#fff;text-align:center;background:#009688;border-radius:2px">编辑</div><div class="a" style="left:147px;top:527px;width:42px;height:22px;line-height:22px;font-size:12px;color:#fff;text-align:center;background:#ff5722;border-radius:2px">删除</div><div class="a" style="left:1129px;top:523px;width:94px;height:29px;line-height:29px;text-align:right;font-size:14px;color:#333">0.00</div><div class="a" style="left:1240px;top:523px;width:94px;height:29px;line-height:29px;text-align:right;font-size:14px;color:#333">0.00</div><div class="a" style="left:1351px;top:523px;width:94px;height:29px;line-height:29px;text-align:right;font-size:14px;color:#333">0.00</div><div class="a" style="left:796px;top:523px;width:94px;height:29px;line-height:29px;text-align:right;font-size:14px;color:#333">0.00</div><div class="a" style="left:907px;top:523px;width:94px;height:29px;line-height:29px;text-align:right;font-size:14px;color:#333">0.00</div><div class="a" style="left:1018px;top:523px;width:94px;height:29px;line-height:29px;text-align:right;font-size:14px;color:#333">0.00</div><div class="a" style="left:0;top:552px;width:1700px;height:29px;background:#fff;border-bottom:1px solid #ccc"></div><div class="a" style="left:0;top:552px;width:41px;height:29px;line-height:29px;text-align:center;font-size:14px;color:#333">19</div><div class="a" style="left:56px;top:557px;width:17px;height:17px;border:1px solid #d2d2d2;background:#fff;border-radius:2px"></div><div class="a" style="left:95px;top:556px;width:42px;height:22px;line-height:22px;font-size:12px;color:#fff;text-align:center;background:#009688;border-radius:2px">编辑</div><div class="a" style="left:147px;top:556px;width:42px;height:22px;line-height:22px;font-size:12px;color:#fff;text-align:center;background:#ff5722;border-radius:2px">删除</div><div class="a" style="left:1129px;top:552px;width:94px;height:29px;line-height:29px;text-align:right;font-size:14px;color:#333">0.00</div><div class="a" style="left:1240px;top:552px;width:94px;height:29px;line-height:29px;text-align:right;font-size:14px;color:#333">0.00</div><div class="a" style="left:1351px;top:552px;width:94px;height:29px;line-height:29px;text-align:right;font-size:14px;color:#333">0.00</div><div class="a" style="left:796px;top:552px;width:94px;height:29px;line-height:29px;text-align:right;font-size:14px;color:#333">0.00</div><div class="a" style="left:907px;top:552px;width:94px;height:29px;line-height:29px;text-align:right;font-size:14px;color:#333">0.00</div><div class="a" style="left:1018px;top:552px;width:94px;height:29px;line-height:29px;text-align:right;font-size:14px;color:#333">0.00</div><div class="a" style="left:0;top:581px;width:1700px;height:29px;background:#fff;border-bottom:1px solid #ccc"></div><div class="a" style="left:0;top:581px;width:41px;height:29px;line-height:29px;text-align:center;font-size:14px;color:#333">20</div><div class="a" style="left:56px;top:586px;width:17px;height:17px;border:1px solid #d2d2d2;background:#fff;border-radius:2px"></div><div class="a" style="left:95px;top:585px;width:42px;height:22px;line-height:22px;font-size:12px;color:#fff;text-align:center;background:#009688;border-radius:2px">编辑</div><div class="a" style="left:147px;top:585px;width:42px;height:22px;line-height:22px;font-size:12px;color:#fff;text-align:center;background:#ff5722;border-radius:2px">删除</div><div class="a" style="left:1129px;top:581px;width:94px;height:29px;line-height:29px;text-align:right;font-size:14px;color:#333">43.00</div><div class="a" style="left:1240px;top:581px;width:94px;height:29px;line-height:29px;text-align:right;font-size:14px;color:#333">55.00</div><div class="a" style="left:1351px;top:581px;width:94px;height:29px;line-height:29px;text-align:right;font-size:14px;color:#333">66.00</div><div class="a" style="left:796px;top:581px;width:94px;height:29px;line-height:29px;text-align:right;font-size:14px;color:#333">0.00</div><div class="a" style="left:907px;top:581px;width:94px;height:29px;line-height:29px;text-align:right;font-size:14px;color:#333">0.00</div><div class="a" style="left:1018px;top:581px;width:94px;height:29px;line-height:29px;text-align:right;font-size:14px;color:#333">0.00</div><div class="a" style="left:0;top:610px;width:1700px;height:29px;background:#fff;border-bottom:1px solid #ccc"></div><div class="a" style="left:0;top:610px;width:41px;height:29px;line-height:29px;text-align:center;font-size:14px;color:#333">21</div><div class="a" style="left:56px;top:615px;width:17px;height:17px;border:1px solid #d2d2d2;background:#fff;border-radius:2px"></div><div class="a" style="left:95px;top:614px;width:42px;height:22px;line-height:22px;font-size:12px;color:#fff;text-align:center;background:#009688;border-radius:2px">编辑</div><div class="a" style="left:147px;top:614px;width:42px;height:22px;line-height:22px;font-size:12px;color:#fff;text-align:center;background:#ff5722;border-radius:2px">删除</div><div class="a" style="left:1129px;top:610px;width:94px;height:29px;line-height:29px;text-align:right;font-size:14px;color:#333">0.00</div><div class="a" style="left:1240px;top:610px;width:94px;height:29px;line-height:29px;text-align:right;font-size:14px;color:#333">0.00</div><div class="a" style="left:1351px;top:610px;width:94px;height:29px;line-height:29px;text-align:right;font-size:14px;color:#333">0.00</div><div class="a" style="left:796px;top:610px;width:94px;height:29px;line-height:29px;text-align:right;font-size:14px;color:#333">0.00</div><div class="a" style="left:907px;top:610px;width:94px;height:29px;line-height:29px;text-align:right;font-size:14px;color:#333">0.00</div><div class="a" style="left:1018px;top:610px;width:94px;height:29px;line-height:29px;text-align:right;font-size:14px;color:#333">0.00</div><div class="a" style="left:0;top:639px;width:1700px;height:29px;background:#fff;border-bottom:1px solid #ccc"></div><div class="a" style="left:0;top:639px;width:41px;height:29px;line-height:29px;text-align:center;font-size:14px;color:#333">22</div><div class="a" style="left:56px;top:644px;width:17px;height:17px;border:1px solid #d2d2d2;background:#fff;border-radius:2px"></div><div class="a" style="left:95px;top:643px;width:42px;height:22px;line-height:22px;font-size:12px;color:#fff;text-align:center;background:#009688;border-radius:2px">编辑</div><div class="a" style="left:147px;top:643px;width:42px;height:22px;line-height:22px;font-size:12px;color:#fff;text-align:center;background:#ff5722;border-radius:2px">删除</div><div class="a" style="left:1129px;top:639px;width:94px;height:29px;line-height:29px;text-align:right;font-size:14px;color:#333">0.00</div><div class="a" style="left:1240px;top:639px;width:94px;height:29px;line-height:29px;text-align:right;font-size:14px;color:#333">0.00</div><div class="a" style="left:1351px;top:639px;width:94px;height:29px;line-height:29px;text-align:right;font-size:14px;color:#333">0.00</div><div class="a" style="left:796px;top:639px;width:94px;height:29px;line-height:29px;text-align:right;font-size:14px;color:#333">0.00</div><div class="a" style="left:907px;top:639px;width:94px;height:29px;line-height:29px;text-align:right;font-size:14px;color:#333">0.00</div><div class="a" style="left:1018px;top:639px;width:94px;height:29px;line-height:29px;text-align:right;font-size:14px;color:#333">0.00</div><div class="a" style="left:0;top:668px;width:1700px;height:29px;background:#fff;border-bottom:1px solid #ccc"></div><div class="a" style="left:0;top:668px;width:41px;height:29px;line-height:29px;text-align:center;font-size:14px;color:#333">23</div><div class="a" style="left:56px;top:673px;width:17px;height:17px;border:1px solid #d2d2d2;background:#fff;border-radius:2px"></div><div class="a" style="left:95px;top:672px;width:42px;height:22px;line-height:22px;font-size:12px;color:#fff;text-align:center;background:#009688;border-radius:2px">编辑</div><div class="a" style="left:147px;top:672px;width:42px;height:22px;line-height:22px;font-size:12px;color:#fff;text-align:center;background:#ff5722;border-radius:2px">删除</div><div class="a" style="left:1129px;top:668px;width:94px;height:29px;line-height:29px;text-align:right;font-size:14px;color:#333">0.00</div><div class="a" style="left:1240px;top:668px;width:94px;height:29px;line-height:29px;text-align:right;font-size:14px;color:#333">0.00</div><div class="a" style="left:1351px;top:668px;width:94px;height:29px;line-height:29px;text-align:right;font-size:14px;color:#333">0.00</div><div class="a" style="left:796px;top:668px;width:94px;height:29px;line-height:29px;text-align:right;font-size:14px;color:#333">0.00</div><div class="a" style="left:907px;top:668px;width:94px;height:29px;line-height:29px;text-align:right;font-size:14px;color:#333">0.00</div><div class="a" style="left:1018px;top:668px;width:94px;height:29px;line-height:29px;text-align:right;font-size:14px;color:#333">0.00</div><div class="a" style="left:0;top:697px;width:1700px;height:29px;background:#fff;border-bottom:1px solid #ccc"></div><div class="a" style="left:0;top:697px;width:41px;height:29px;line-height:29px;text-align:center;font-size:14px;color:#333">24</div><div class="a" style="left:56px;top:702px;width:17px;height:17px;border:1px solid #d2d2d2;background:#fff;border-radius:2px"></div><div class="a" style="left:95px;top:701px;width:42px;height:22px;line-height:22px;font-size:12px;color:#fff;text-align:center;background:#009688;border-radius:2px">编辑</div><div class="a" style="left:147px;top:701px;width:42px;height:22px;line-height:22px;font-size:12px;color:#fff;text-align:center;background:#ff5722;border-radius:2px">删除</div><div class="a" style="left:1129px;top:697px;width:94px;height:29px;line-height:29px;text-align:right;font-size:14px;color:#333">0.00</div><div class="a" style="left:1240px;top:697px;width:94px;height:29px;line-height:29px;text-align:right;font-size:14px;color:#333">0.00</div><div class="a" style="left:1351px;top:697px;width:94px;height:29px;line-height:29px;text-align:right;font-size:14px;color:#333">0.00</div><div class="a" style="left:796px;top:697px;width:94px;height:29px;line-height:29px;text-align:right;font-size:14px;color:#333">0.00</div><div class="a" style="left:907px;top:697px;width:94px;height:29px;line-height:29px;text-align:right;font-size:14px;color:#333">0.00</div><div class="a" style="left:1018px;top:697px;width:94px;height:29px;line-height:29px;text-align:right;font-size:14px;color:#333">0.00</div><div class="a" style="left:0;top:726px;width:1700px;height:29px;background:#fff;border-bottom:1px solid #ccc"></div><div class="a" style="left:0;top:726px;width:41px;height:29px;line-height:29px;text-align:center;font-size:14px;color:#333">25</div><div class="a" style="left:56px;top:731px;width:17px;height:17px;border:1px solid #d2d2d2;background:#fff;border-radius:2px"></div><div class="a" style="left:95px;top:730px;width:42px;height:22px;line-height:22px;font-size:12px;color:#fff;text-align:center;background:#009688;border-radius:2px">编辑</div><div class="a" style="left:147px;top:730px;width:42px;height:22px;line-height:22px;font-size:12px;color:#fff;text-align:center;background:#ff5722;border-radius:2px">删除</div><div class="a" style="left:1129px;top:726px;width:94px;height:29px;line-height:29px;text-align:right;font-size:14px;color:#333">0.00</div><div class="a" style="left:1240px;top:726px;width:94px;height:29px;line-height:29px;text-align:right;font-size:14px;color:#333">0.00</div><div class="a" style="left:1351px;top:726px;width:94px;height:29px;line-height:29px;text-align:right;font-size:14px;color:#333">0.00</div><div class="a" style="left:796px;top:726px;width:94px;height:29px;line-height:29px;text-align:right;font-size:14px;color:#333">0.00</div><div class="a" style="left:907px;top:726px;width:94px;height:29px;line-height:29px;text-align:right;font-size:14px;color:#333">0.00</div><div class="a" style="left:1018px;top:726px;width:94px;height:29px;line-height:29px;text-align:right;font-size:14px;color:#333">0.00</div><div class="a" style="left:40px;top:30px;width:1px;height:760px;background:#ccc"></div><div class="a" style="left:89px;top:30px;width:1px;height:760px;background:#ccc"></div><div class="a" style="left:220px;top:30px;width:1px;height:760px;background:#ccc"></div><div class="a" style="left:341px;top:30px;width:1px;height:760px;background:#ccc"></div><div class="a" style="left:502px;top:30px;width:1px;height:760px;background:#ccc"></div><div class="a" style="left:664px;top:30px;width:1px;height:760px;background:#ccc"></div><div class="a" style="left:784px;top:30px;width:1px;height:760px;background:#ccc"></div><div class="a" style="left:895px;top:30px;width:1px;height:760px;background:#ccc"></div><div class="a" style="left:1006px;top:30px;width:1px;height:760px;background:#ccc"></div><div class="a" style="left:1117px;top:30px;width:1px;height:760px;background:#ccc"></div><div class="a" style="left:1228px;top:30px;width:1px;height:760px;background:#ccc"></div><div class="a" style="left:1339px;top:30px;width:1px;height:760px;background:#ccc"></div><div class="a" style="left:1450px;top:30px;width:1px;height:760px;background:#ccc"></div><div class="a" style="left:1561px;top:30px;width:1px;height:760px;background:#ccc"></div><div class="a" style="left:226px;top:30px;height:29px;line-height:29px;font-size:14px;color:#333">00100001</div><div class="a" style="left:226px;top:610px;height:29px;line-height:29px;font-size:14px;color:#333">00100015</div><div class="a" style="left:347px;top:610px;height:29px;line-height:29px;font-size:14px;color:#333">750</div><div class="a" style="left:508px;top:610px;height:29px;line-height:29px;font-size:14px;color:#333">大修类123</div><div class="a" style="left:670px;top:610px;height:29px;line-height:29px;font-size:14px;color:#333">启用</div><div class="a" style="left:226px;top:639px;height:29px;line-height:29px;font-size:14px;color:#333">00100017</div><div class="a" style="left:347px;top:639px;height:29px;line-height:29px;font-size:14px;color:#333">4rgere0</div><div class="a" style="left:508px;top:639px;height:29px;line-height:29px;font-size:14px;color:#333">测试类别</div><div class="a" style="left:670px;top:639px;height:29px;line-height:29px;font-size:14px;color:#333">启用</div><div class="a" style="left:226px;top:668px;height:29px;line-height:29px;font-size:14px;color:#333">00100018</div><div class="a" style="left:347px;top:668px;height:29px;line-height:29px;font-size:14px;color:#333">23232323</div><div class="a" style="left:508px;top:668px;height:29px;line-height:29px;font-size:14px;color:#333">大修类123</div><div class="a" style="left:670px;top:668px;height:29px;line-height:29px;font-size:14px;color:#333">启用</div><div class="a" style="left:226px;top:697px;height:29px;line-height:29px;font-size:14px;color:#333">00100019</div><div class="a" style="left:347px;top:697px;height:29px;line-height:29px;font-size:14px;color:#333">6666比例</div><div class="a" style="left:508px;top:697px;height:29px;line-height:29px;font-size:14px;color:#333">大修类123</div><div class="a" style="left:670px;top:697px;height:29px;line-height:29px;font-size:14px;color:#333">启用</div><div class="a" style="left:226px;top:59px;height:29px;line-height:29px;font-size:14px;color:#333">10010001</div><div class="a" style="left:226px;top:88px;height:29px;line-height:29px;font-size:14px;color:#333">12010001</div><div class="a" style="left:226px;top:117px;height:29px;line-height:29px;font-size:14px;color:#333">00100001</div><div class="a" style="left:226px;top:146px;height:29px;line-height:29px;font-size:14px;color:#333">00100001</div><div class="a" style="left:226px;top:175px;height:29px;line-height:29px;font-size:14px;color:#333">00100001</div><div class="a" style="left:226px;top:204px;height:29px;line-height:29px;font-size:14px;color:#333">00100001</div><div class="a" style="left:226px;top:233px;height:29px;line-height:29px;font-size:14px;color:#333">12010001</div><div class="a" style="left:226px;top:262px;height:29px;line-height:29px;font-size:14px;color:#333">20010001</div><div class="a" style="left:226px;top:291px;height:29px;line-height:29px;font-size:14px;color:#333">00100001</div><div class="a" style="left:226px;top:320px;height:29px;line-height:29px;font-size:14px;color:#333">00100001</div><div class="a" style="left:226px;top:349px;height:29px;line-height:29px;font-size:14px;color:#333">00100001</div><div class="a" style="left:226px;top:378px;height:29px;line-height:29px;font-size:14px;color:#333">00100001</div><div class="a" style="left:226px;top:407px;height:29px;line-height:29px;font-size:14px;color:#333">00100001</div><div class="a" style="left:226px;top:436px;height:29px;line-height:29px;font-size:14px;color:#333">00100001</div><div class="a" style="left:226px;top:465px;height:29px;line-height:29px;font-size:14px;color:#333">00100001</div><div class="a" style="left:226px;top:494px;height:29px;line-height:29px;font-size:14px;color:#333">00100001</div><div class="a" style="left:226px;top:523px;height:29px;line-height:29px;font-size:14px;color:#333">00100001</div><div class="a" style="left:226px;top:552px;height:29px;line-height:29px;font-size:14px;color:#333">00100001</div><div class="a" style="left:226px;top:581px;height:29px;line-height:29px;font-size:14px;color:#333">00100001</div></div>
<svg style="left:0;top:0" width="1920" height="930"><polygon points="290.90,151.60 292.88,153.81 295.85,153.65 295.69,156.62 297.90,158.60 295.69,160.58 295.85,163.55 292.88,163.39 290.90,165.60 288.92,163.39 285.95,163.55 286.11,160.58 283.90,158.60 286.11,156.62 285.95,153.65 288.92,153.81" fill="#000" stroke="#000" stroke-width="0.6" stroke-linejoin="round"/><circle cx="290.9" cy="158.6" r="3.50" fill="none" stroke="#e6e6e6" stroke-width="1.12"/><circle cx="290.9" cy="158.6" r="0.91" fill="#e6e6e6"/></svg>
<div class="a" style="left:1903px;top:173px;width:17px;height:702px;background:#f0f0f0"></div>
<div class="a" style="left:1907.5px;top:181px;width:0;height:0;border-left:4.5px solid transparent;border-right:4.5px solid transparent;border-bottom:4.5px solid #555"></div>
<div class="a" style="left:1905px;top:191px;width:13px;height:161px;background:#c1c1c1"></div>
<div class="a" style="left:1907.5px;top:863px;width:0;height:0;border-left:4.5px solid transparent;border-right:4.5px solid transparent;border-top:4.5px solid #555"></div>
<div class="a" style="left:270px;top:875px;width:1633px;height:16px;background:#f0f0f0"></div>
<div class="a" style="left:1903px;top:875px;width:17px;height:16px;background:#dcdcdc"></div>
<div class="a" style="left:277px;top:879px;width:0;height:0;border-top:4.0px solid transparent;border-bottom:4.0px solid transparent;border-right:4.5px solid #777"></div>
<div class="a" style="left:288px;top:877px;width:660px;height:13px;background:#c1c1c1"></div>
<div class="a" style="left:1892px;top:879px;width:0;height:0;border-top:4.0px solid transparent;border-bottom:4.0px solid transparent;border-left:4.5px solid #333"></div>
<div class="pg" style="left:280px;top:896px;width:81px;text-align:left;padding-left:8px">100 条/页</div>
<svg style="left:0;top:0" width="1920" height="930"><path d="M347 909 L351 913 L355 909" stroke="#000" stroke-width="2" fill="none"/></svg>
<div class="pg" style="left:372px;top:896px;width:413px"></div>
<div class="a" style="left:372px;top:896px;width:66px;height:30px;color:#333;font-size:13px;line-height:30px;text-align:center">上一页</div>
<div class="a" style="left:438px;top:896px;width:38px;height:30px;background:#009688;color:#fff;font-size:13px;line-height:30px;text-align:center;border-radius:2px;font-weight:bold">1</div>
<div class="a" style="left:476px;top:896px;width:38px;height:30px;color:#333;font-size:13px;line-height:30px;text-align:center">2</div>
<div class="a" style="left:514px;top:896px;width:38px;height:30px;color:#333;font-size:13px;line-height:30px;text-align:center">3</div>
<div class="a" style="left:514px;top:897px;width:1px;height:28px;background:#e2e2e2"></div>
<div class="a" style="left:552px;top:896px;width:38px;height:30px;color:#333;font-size:13px;line-height:30px;text-align:center">4</div>
<div class="a" style="left:552px;top:897px;width:1px;height:28px;background:#e2e2e2"></div>
<div class="a" style="left:590px;top:896px;width:37px;height:30px;color:#333;font-size:13px;line-height:30px;text-align:center">5</div>
<div class="a" style="left:590px;top:897px;width:1px;height:28px;background:#e2e2e2"></div>
<div class="a" style="left:627px;top:896px;width:41px;height:30px;color:#333;font-size:13px;line-height:30px;text-align:center">…</div>
<div class="a" style="left:627px;top:897px;width:1px;height:28px;background:#e2e2e2"></div>
<div class="a" style="left:668px;top:896px;width:46px;height:30px;color:#333;font-size:13px;line-height:30px;text-align:center">20</div>
<div class="a" style="left:668px;top:897px;width:1px;height:28px;background:#e2e2e2"></div>
<div class="a" style="left:714px;top:896px;width:71px;height:30px;color:#333;font-size:13px;line-height:30px;text-align:center">下一页</div>
<div class="a" style="left:714px;top:897px;width:1px;height:28px;background:#e2e2e2"></div>
<div class="a" style="left:793px;top:896px;font-size:13px;line-height:30px;color:#999">到第</div>
<div class="pg" style="left:826px;top:896px;width:40px">1</div>
<div class="a" style="left:876px;top:896px;font-size:13px;line-height:30px;color:#999">页</div>
<div class="pg" style="left:898px;top:896px;width:45px">确定</div>
<svg style="left:0;top:0" width="1920" height="930"><path d="M978.79 906.69 A7.6 7.6 0 1 0 979.33 911.48" stroke="#333" stroke-width="1.1" fill="none"/><path d="M979.30 903.10 V907.30 H975.10" stroke="#222" stroke-width="1.2" fill="none"/></svg>
<div class="a" style="left:1000px;top:896px;font-size:13px;line-height:30px;color:#333">共 1924 条</div>
<div class="a" style="left:0;top:0;width:1920px;height:930px;background:rgba(0,0,0,.3)"></div>
<div class="a" style="left:0;top:0;width:1920px;height:5px;background:#fff"></div>
<div class="a" style="left:510px;top:169px;width:900px;height:600px;background:#fff;border-radius:2px;box-shadow:1px 1px 50px rgba(0,0,0,.3);overflow:hidden"><div class="a" style="left:0;top:0;width:900px;height:43px;background:#f8f8f8;border-bottom:1px solid #eee"></div><div class="a" style="left:20px;top:0;height:43px;font-size:14px;line-height:43px;color:#333">查看修改记录</div><svg style="left:0;top:0" width="900" height="60"><path d="M870 16 L881 27 M881 16 L870 27" stroke="#333" stroke-width="1.4" fill="none"/></svg><div class="a" style="left:0;top:82px;width:876px;height:427px;overflow:hidden"><div class="a" style="left:0;top:-8px;width:876px;height:30px;background:#fff;border-bottom:1px solid #ddd;border-top:1px solid #ddd"></div><div class="mc" style="left:0px;top:-8px;width:42px;text-align:center;line-height:30px">2</div><div class="mc" style="left:42px;top:-8px;width:151px;padding-left:6px;line-height:30px">2024-10-23 16:48:37</div><div class="mc" style="left:193px;top:-8px;width:121px;padding-left:6px;line-height:30px">小沈--上海驷惠...</div><div class="mc" style="left:314px;top:-8px;width:381px;padding-left:6px;line-height:30px">保养周期:0->3；</div><div class="mc" style="left:695px;top:-8px;width:181px;padding-left:6px;line-height:30px">精武汽车服务有限公司04...</div><div class="a" style="left:0;top:21px;width:876px;height:30px;background:#fff;border-bottom:1px solid #ddd;border-top:1px solid #ddd"></div><div class="mc" style="left:0px;top:21px;width:42px;text-align:center;line-height:30px">3</div><div class="mc" style="left:42px;top:21px;width:151px;padding-left:6px;line-height:30px">2024-05-30 14:59:09</div><div class="mc" style="left:193px;top:21px;width:121px;padding-left:6px;line-height:30px">小沈--上海驷惠...</div><div class="mc" style="left:314px;top:21px;width:381px;padding-left:6px;line-height:30px">类别:钣金->大修类123；</div><div class="mc" style="left:695px;top:21px;width:181px;padding-left:6px;line-height:30px">精武汽车服务有限公司04...</div><div class="a" style="left:0;top:50px;width:876px;height:30px;background:#fff;border-bottom:1px solid #ddd;border-top:1px solid #ddd"></div><div class="mc" style="left:0px;top:50px;width:42px;text-align:center;line-height:30px">4</div><div class="mc" style="left:42px;top:50px;width:151px;padding-left:6px;line-height:30px">2024-05-30 14:56:46</div><div class="mc" style="left:193px;top:50px;width:121px;padding-left:6px;line-height:30px">小沈--上海驷惠...</div><div class="mc" style="left:314px;top:50px;width:381px;padding-left:6px;line-height:30px">业务类别:->搭电；</div><div class="mc" style="left:695px;top:50px;width:181px;padding-left:6px;line-height:30px">精武汽车服务有限公司04...</div><div class="a" style="left:0;top:79px;width:876px;height:30px;background:#fff;border-bottom:1px solid #ddd;border-top:1px solid #ddd"></div><div class="mc" style="left:0px;top:79px;width:42px;text-align:center;line-height:30px">5</div><div class="mc" style="left:42px;top:79px;width:151px;padding-left:6px;line-height:30px">2024-05-20 10:10:48</div><div class="mc" style="left:193px;top:79px;width:121px;padding-left:6px;line-height:30px">（机修组）nbl</div><div class="mc" style="left:314px;top:79px;width:381px;padding-left:6px;line-height:30px">项目类型:->加工费；</div><div class="mc" style="left:695px;top:79px;width:181px;padding-left:6px;line-height:30px">精武汽车服务有限公司04...</div><div class="a" style="left:0;top:108px;width:876px;height:30px;background:#fff;border-bottom:1px solid #ddd;border-top:1px solid #ddd"></div><div class="mc" style="left:0px;top:108px;width:42px;text-align:center;line-height:30px">6</div><div class="mc" style="left:42px;top:108px;width:151px;padding-left:6px;line-height:30px">2024-05-14 15:57:01</div><div class="mc" style="left:193px;top:108px;width:121px;padding-left:6px;line-height:30px">小沈--上海驷惠...</div><div class="mc" style="left:314px;top:108px;width:381px;padding-left:6px;line-height:30px">三类工时:0.500000->0.51；</div><div class="mc" style="left:695px;top:108px;width:181px;padding-left:6px;line-height:30px">精武汽车服务有限公司04...</div><div class="a" style="left:0;top:137px;width:876px;height:30px;background:#fff;border-bottom:1px solid #ddd;border-top:1px solid #ddd"></div><div class="mc" style="left:0px;top:137px;width:42px;text-align:center;line-height:30px">7</div><div class="mc" style="left:42px;top:137px;width:151px;padding-left:6px;line-height:30px">2024-04-23 16:57:42</div><div class="mc" style="left:193px;top:137px;width:121px;padding-left:6px;line-height:30px">小沈--上海驷惠...</div><div class="mc" style="left:314px;top:137px;width:381px;padding-left:6px;line-height:30px">项目金额:0.00->320.00；</div><div class="mc" style="left:695px;top:137px;width:181px;padding-left:6px;line-height:30px">精武汽车服务有限公司04...</div><div class="a" style="left:0;top:166px;width:876px;height:30px;background:#fff;border-bottom:1px solid #ddd;border-top:1px solid #ddd"></div><div class="mc" style="left:0px;top:166px;width:42px;text-align:center;line-height:30px">8</div><div class="mc" style="left:42px;top:166px;width:151px;padding-left:6px;line-height:30px">2024-04-22 10:38:58</div><div class="mc" style="left:193px;top:166px;width:121px;padding-left:6px;line-height:30px">小沈--上海驷惠...</div><div class="mc" style="left:314px;top:166px;width:381px;padding-left:6px;line-height:30px">收费方式:按金额收费->按工时单价收费；&nbsp;项目类型:洗车-...</div><div class="mc" style="left:695px;top:166px;width:181px;padding-left:6px;line-height:30px">精武汽车服务有限公司04...</div><div class="a" style="left:0;top:195px;width:876px;height:30px;background:#e2e2e2;border-bottom:1px solid #ddd;border-top:1px solid #ddd"></div><div class="mc" style="left:0px;top:195px;width:42px;text-align:center;line-height:30px">9</div><div class="mc" style="left:42px;top:195px;width:151px;padding-left:6px;line-height:30px">2024-04-22 10:37:54</div><div class="mc" style="left:193px;top:195px;width:121px;padding-left:6px;line-height:30px">小沈--上海驷惠...</div><div class="mc" style="left:314px;top:195px;width:381px;padding-left:6px;line-height:30px">一类工时:0.550000->0.50；&nbsp;二类工时:1.000000->0.50；</div><div class="mc" style="left:695px;top:195px;width:181px;padding-left:6px;line-height:30px">精武汽车服务有限公司04...</div><div class="a" style="left:669px;top:196px;width:25px;height:28px;background:#fff;border-left:1px solid #ddd"></div><svg style="left:0;top:0" width="900" height="500"><path d="M674.5 208 L681.5 215 L688.5 208" stroke="#999" stroke-width="1.2" fill="none"/></svg><div class="a" style="left:0;top:224px;width:876px;height:30px;background:#fff;border-bottom:1px solid #ddd;border-top:1px solid #ddd"></div><div class="mc" style="left:0px;top:224px;width:42px;text-align:center;line-height:30px">10</div><div class="mc" style="left:42px;top:224px;width:151px;padding-left:6px;line-height:30px">2024-01-19 14:26:29</div><div class="mc" style="left:193px;top:224px;width:121px;padding-left:6px;line-height:30px">nbl2</div><div class="mc" style="left:314px;top:224px;width:381px;padding-left:6px;line-height:30px">项目类型:->洗车；</div><div class="mc" style="left:695px;top:224px;width:181px;padding-left:6px;line-height:30px">精武汽车服务有限公司</div><div class="a" style="left:0;top:253px;width:876px;height:30px;background:#fff;border-bottom:1px solid #ddd;border-top:1px solid #ddd"></div><div class="mc" style="left:0px;top:253px;width:42px;text-align:center;line-height:30px">11</div><div class="mc" style="left:42px;top:253px;width:151px;padding-left:6px;line-height:30px">2024-01-05 17:23:08</div><div class="mc" style="left:193px;top:253px;width:121px;padding-left:6px;line-height:30px">小沈--上海驷惠...</div><div class="mc" style="left:314px;top:253px;width:381px;padding-left:6px;line-height:30px">收费方式:按工时单价收费->按金额收费；</div><div class="mc" style="left:695px;top:253px;width:181px;padding-left:6px;line-height:30px">精武汽车服务有限公司</div><div class="a" style="left:0;top:282px;width:876px;height:30px;background:#fff;border-bottom:1px solid #ddd;border-top:1px solid #ddd"></div><div class="mc" style="left:0px;top:282px;width:42px;text-align:center;line-height:30px">12</div><div class="mc" style="left:42px;top:282px;width:151px;padding-left:6px;line-height:30px">2024-01-05 11:28:08</div><div class="mc" style="left:193px;top:282px;width:121px;padding-left:6px;line-height:30px">小沈--上海驷惠...</div><div class="mc" style="left:314px;top:282px;width:381px;padding-left:6px;line-height:30px">收费方式:按金额收费->按工时单价收费；</div><div class="mc" style="left:695px;top:282px;width:181px;padding-left:6px;line-height:30px">精武汽车服务有限公司</div><div class="a" style="left:0;top:311px;width:876px;height:30px;background:#fff;border-bottom:1px solid #ddd;border-top:1px solid #ddd"></div><div class="mc" style="left:0px;top:311px;width:42px;text-align:center;line-height:30px">13</div><div class="mc" style="left:42px;top:311px;width:151px;padding-left:6px;line-height:30px">2023-12-14 16:45:49</div><div class="mc" style="left:193px;top:311px;width:121px;padding-left:6px;line-height:30px">小沈--上海驷惠...</div><div class="mc" style="left:314px;top:311px;width:381px;padding-left:6px;line-height:30px">一类工时:0.500000->0.55；</div><div class="mc" style="left:695px;top:311px;width:181px;padding-left:6px;line-height:30px">精武汽车服务有限公司</div><div class="a" style="left:0;top:340px;width:876px;height:30px;background:#fff;border-bottom:1px solid #ddd;border-top:1px solid #ddd"></div><div class="mc" style="left:0px;top:340px;width:42px;text-align:center;line-height:30px">14</div><div class="mc" style="left:42px;top:340px;width:151px;padding-left:6px;line-height:30px">2023-10-30 16:56:43</div><div class="mc" style="left:193px;top:340px;width:121px;padding-left:6px;line-height:30px">小沈--上海驷惠...</div><div class="mc" style="left:314px;top:340px;width:381px;padding-left:6px;line-height:30px">项目名称:更换挡泥板（轮）-推荐值1->1更换挡泥板（轮...</div><div class="mc" style="left:695px;top:340px;width:181px;padding-left:6px;line-height:30px">精武汽车服务有限公司</div><div class="a" style="left:0;top:369px;width:876px;height:30px;background:#fff;border-bottom:1px solid #ddd;border-top:1px solid #ddd"></div><div class="mc" style="left:0px;top:369px;width:42px;text-align:center;line-height:30px">15</div><div class="mc" style="left:42px;top:369px;width:151px;padding-left:6px;line-height:30px">2023-09-19 11:44:01</div><div class="mc" style="left:193px;top:369px;width:121px;padding-left:6px;line-height:30px">小沈-上海驷惠...</div><div class="mc" style="left:314px;top:369px;width:381px;padding-left:6px;line-height:30px">排序字段:1->0；</div><div class="mc" style="left:695px;top:369px;width:181px;padding-left:6px;line-height:30px">精武汽车服务有限公司</div><div class="a" style="left:0;top:398px;width:876px;height:30px;background:#fff;border-bottom:1px solid #ddd;border-top:1px solid #ddd"></div><div class="mc" style="left:0px;top:398px;width:42px;text-align:center;line-height:30px">16</div><div class="mc" style="left:42px;top:398px;width:151px;padding-left:6px;line-height:30px">2023-09-13 09:32:25</div><div class="mc" style="left:193px;top:398px;width:121px;padding-left:6px;line-height:30px">nbl</div><div class="mc" style="left:314px;top:398px;width:381px;padding-left:6px;line-height:30px">项目名称:更换挡泥板（轮）->更换挡泥板（轮）-推荐值1...</div><div class="mc" style="left:695px;top:398px;width:181px;padding-left:6px;line-height:30px">精武汽车服务有限公司</div><div class="a" style="left:41px;top:0;width:1px;height:427px;background:#ddd"></div><div class="a" style="left:192px;top:0;width:1px;height:427px;background:#ddd"></div><div class="a" style="left:313px;top:0;width:1px;height:427px;background:#ddd"></div><div class="a" style="left:694px;top:0;width:1px;height:427px;background:#ddd"></div><div class="a" style="left:875px;top:0;width:1px;height:427px;background:#ddd"></div><div class="a" style="left:0;top:426px;width:884px;height:1px;background:#ddd"></div></div><div class="a" style="left:0;top:53px;width:900px;height:30px;background:#e2e2e2;border-top:1px solid #d0d0d0;border-bottom:1px solid #d0d0d0"></div><div class="a" style="left:41px;top:54px;width:1px;height:28px;background:#d0d0d0"></div><div class="a" style="left:192px;top:54px;width:1px;height:28px;background:#d0d0d0"></div><div class="a" style="left:313px;top:54px;width:1px;height:28px;background:#d0d0d0"></div><div class="a" style="left:694px;top:54px;width:1px;height:28px;background:#d0d0d0"></div><div class="a" style="left:875px;top:54px;width:1px;height:28px;background:#d0d0d0"></div><div class="a" style="left:77.8px;top:54px;height:29px;font-size:14px;font-weight:bold;line-height:29px;color:#000">变更日期</div><div class="a" style="left:145.25px;top:63px;width:0;height:0;border-left:5.0px solid transparent;border-right:5.0px solid transparent;border-bottom:5px solid #bbb"></div><div class="a" style="left:145.25px;top:70px;width:0;height:0;border-left:5.0px solid transparent;border-right:5.0px solid transparent;border-top:5px solid #bbb"></div><div class="a" style="left:220.8px;top:54px;height:29px;font-size:14px;font-weight:bold;line-height:29px;color:#000">操作人</div><div class="a" style="left:274.25px;top:63px;width:0;height:0;border-left:5.0px solid transparent;border-right:5.0px solid transparent;border-bottom:5px solid #bbb"></div><div class="a" style="left:274.25px;top:70px;width:0;height:0;border-left:5.0px solid transparent;border-right:5.0px solid transparent;border-top:5px solid #bbb"></div><div class="a" style="left:464.8px;top:54px;height:29px;font-size:14px;font-weight:bold;line-height:29px;color:#000">变更内容</div><div class="a" style="left:532.25px;top:63px;width:0;height:0;border-left:5.0px solid transparent;border-right:5.0px solid transparent;border-bottom:5px solid #bbb"></div><div class="a" style="left:532.25px;top:70px;width:0;height:0;border-left:5.0px solid transparent;border-right:5.0px solid transparent;border-top:5px solid #bbb"></div><div class="a" style="left:759.8px;top:54px;height:29px;font-size:14px;font-weight:bold;line-height:29px;color:#000">公司</div><div class="a" style="left:799.25px;top:63px;width:0;height:0;border-left:5.0px solid transparent;border-right:5.0px solid transparent;border-bottom:5px solid #bbb"></div><div class="a" style="left:799.25px;top:70px;width:0;height:0;border-left:5.0px solid transparent;border-right:5.0px solid transparent;border-top:5px solid #bbb"></div><div class="a" style="left:883px;top:82px;width:16px;height:427px;background:#f0f0f0"></div><div class="a" style="left:887px;top:89px;width:0;height:0;border-left:4.5px solid transparent;border-right:4.5px solid transparent;border-bottom:4.5px solid #505050"></div><div class="a" style="left:885px;top:131px;width:13px;height:362px;background:#c1c1c1"></div><div class="a" style="left:887px;top:499px;width:0;height:0;border-left:4.5px solid transparent;border-right:4.5px solid transparent;border-top:4.5px solid #a0a0a0"></div><div class="pg" style="left:10px;top:514px;width:81px;text-align:left;padding-left:8px;color:#000">20 条/页</div><svg style="left:0;top:0" width="900" height="600"><path d="M74 527 L78 531 L82 527" stroke="#000" stroke-width="2" fill="none"/></svg><div class="pg" style="left:102px;top:514px;width:172px"></div><div class="a" style="left:102px;top:514px;width:66px;height:30px;font-size:13px;line-height:30px;text-align:center;color:#333">上一页</div><div class="a" style="left:168px;top:513px;width:39px;height:31px;background:#009688;color:#fff;font-size:13px;line-height:31px;text-align:center;border-radius:2px;font-weight:bold">1</div><div class="a" style="left:207px;top:514px;width:67px;height:30px;font-size:13px;line-height:30px;text-align:center;color:#333">下一页</div><div class="a" style="left:283px;top:514px;font-size:13px;line-height:30px;color:#999">到第</div><div class="pg" style="left:316px;top:514px;width:41px">1</div><div class="a" style="left:366px;top:514px;font-size:13px;line-height:30px;color:#999">页</div><div class="pg" style="left:389px;top:514px;width:45px">确定</div><svg style="left:0;top:0" width="900" height="600"><path d="M470.79 524.89 A7.6 7.6 0 1 0 471.33 529.68" stroke="#333" stroke-width="1.1" fill="none"/><path d="M471.30 521.30 V525.50 H467.10" stroke="#222" stroke-width="1.2" fill="none"/></svg><div class="a" style="left:492px;top:514px;font-size:13px;line-height:30px;color:#333">共 16 条</div><div class="a" style="left:0;top:557px;width:900px;height:1px;background:#e6e6e6"></div><div class="a" style="left:213.5px;top:568px;font-size:19px;line-height:30px;color:#ff2a2a">项目档案里<span style="display:inline-block;width:19px;text-align:right">‘</span>七八类工时<span style="display:inline-block;width:19px;text-align:left">’</span>能保存上了<span style="display:inline-block;width:19px;text-align:left;padding-left:1px">,</span>注意这里的修改记录显示是否正确</div><div class="a" style="left:839px;top:563px;width:56px;height:28px;background:#999;color:#fff;font-size:13px;line-height:28px;text-align:center;border-radius:2px">关闭</div></div>
<svg style="left:0;top:0" width="1920" height="930"><polygon points="530.90,229.60 532.88,231.81 535.85,231.65 535.69,234.62 537.90,236.60 535.69,238.58 535.85,241.55 532.88,241.39 530.90,243.60 528.92,241.39 525.95,241.55 526.11,238.58 523.90,236.60 526.11,234.62 525.95,231.65 528.92,231.81" fill="#000" stroke="#000" stroke-width="0.6" stroke-linejoin="round"/><circle cx="530.9" cy="236.6" r="3.50" fill="none" stroke="#e2e2e2" stroke-width="1.12"/><circle cx="530.9" cy="236.6" r="0.91" fill="#e2e2e2"/></svg>
</body></html>
